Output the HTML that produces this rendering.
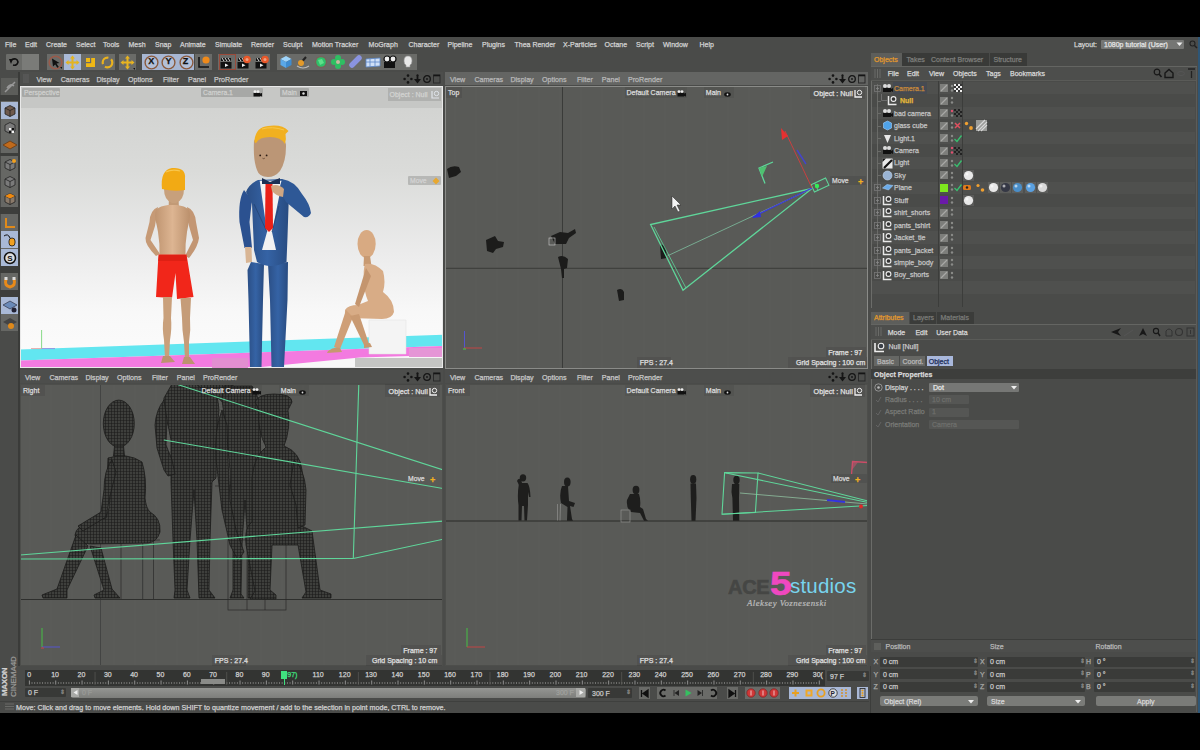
<!DOCTYPE html><html><head><meta charset="utf-8"><style>
*{margin:0;padding:0;box-sizing:border-box}
html,body{width:1200px;height:750px;overflow:hidden;background:#000}
body{position:relative;font-family:"Liberation Sans",sans-serif;color:#d8d8d8}
.a{position:absolute}
.t{position:absolute;white-space:nowrap;line-height:1;-webkit-text-stroke:0.25px currentColor}
svg{position:absolute;overflow:visible}
</style></head><body>
<div class="a" style="left:0px;top:0px;width:1200px;height:37px;background:#000;"></div>
<div class="a" style="left:0px;top:37px;width:1200px;height:676px;background:#4a4b49;"></div>
<div class="a" style="left:0px;top:713px;width:1200px;height:37px;background:#000;"></div>
<div class="t" style="left:5px;top:40.5px;font-size:7.0px;color:#d2d2d2;">File</div>
<div class="t" style="left:25px;top:40.5px;font-size:7.0px;color:#d2d2d2;">Edit</div>
<div class="t" style="left:46px;top:40.5px;font-size:7.0px;color:#d2d2d2;">Create</div>
<div class="t" style="left:76px;top:40.5px;font-size:7.0px;color:#d2d2d2;">Select</div>
<div class="t" style="left:103px;top:40.5px;font-size:7.0px;color:#d2d2d2;">Tools</div>
<div class="t" style="left:128.5px;top:40.5px;font-size:7.0px;color:#d2d2d2;">Mesh</div>
<div class="t" style="left:155px;top:40.5px;font-size:7.0px;color:#d2d2d2;">Snap</div>
<div class="t" style="left:180px;top:40.5px;font-size:7.0px;color:#d2d2d2;">Animate</div>
<div class="t" style="left:215px;top:40.5px;font-size:7.0px;color:#d2d2d2;">Simulate</div>
<div class="t" style="left:251px;top:40.5px;font-size:7.0px;color:#d2d2d2;">Render</div>
<div class="t" style="left:283px;top:40.5px;font-size:7.0px;color:#d2d2d2;">Sculpt</div>
<div class="t" style="left:312px;top:40.5px;font-size:7.0px;color:#d2d2d2;">Motion Tracker</div>
<div class="t" style="left:368.6px;top:40.5px;font-size:7.0px;color:#d2d2d2;">MoGraph</div>
<div class="t" style="left:408.5px;top:40.5px;font-size:7.0px;color:#d2d2d2;">Character</div>
<div class="t" style="left:447.5px;top:40.5px;font-size:7.0px;color:#d2d2d2;">Pipeline</div>
<div class="t" style="left:482px;top:40.5px;font-size:7.0px;color:#d2d2d2;">Plugins</div>
<div class="t" style="left:514.5px;top:40.5px;font-size:7.0px;color:#d2d2d2;">Thea Render</div>
<div class="t" style="left:563px;top:40.5px;font-size:7.0px;color:#d2d2d2;">X-Particles</div>
<div class="t" style="left:604.5px;top:40.5px;font-size:7.0px;color:#d2d2d2;">Octane</div>
<div class="t" style="left:636px;top:40.5px;font-size:7.0px;color:#d2d2d2;">Script</div>
<div class="t" style="left:663px;top:40.5px;font-size:7.0px;color:#d2d2d2;">Window</div>
<div class="t" style="left:699.5px;top:40.5px;font-size:7.0px;color:#d2d2d2;">Help</div>
<div class="a" style="left:6px;top:54px;width:33px;height:16px;background:#6b6c69;border-radius:1px"></div>
<div class="a" style="left:22px;top:54px;width:17px;height:16px;background:#7a7b78;"></div>
<svg style="left:8px;top:56px;" width="12" height="12" viewBox="0 0 12 12"><path d="M3 4 Q9 1 10 6 Q9 10 5 9" stroke="#111" stroke-width="1.6" fill="none"/><path d="M1 3 L5 3 L3 8 Z" fill="#111"/></svg>
<div class="a" style="left:47px;top:54px;width:89px;height:16px;background:#6a6b68;"></div>
<div class="a" style="left:64px;top:54px;width:17px;height:16px;background:#a9b9d6;"></div>
<svg style="left:48px;top:55px;" width="15" height="15" viewBox="0 0 15 15"><circle cx="7.5" cy="7.5" r="6.3" fill="none" stroke="#9a5a4a" stroke-width="1.6"/><path d="M4 3.5 L11.5 8 L8.5 8.6 L10.8 12 L9.3 12.8 L7.2 9.6 L5 11.6 Z" fill="#111"/><path d="M12 12 L14 14 L14 12 Z" fill="#111"/></svg>
<svg style="left:65px;top:55px;" width="15" height="15" viewBox="0 0 15 15"><path d="M7.5 2.5 L7.5 12.5 M2.5 7.5 L12.5 7.5" stroke="#e3b420" stroke-width="2"/><path d="M7.5 0.5 L10 3.5 L5 3.5 Z M7.5 14.5 L10 11.5 L5 11.5 Z M0.5 7.5 L3.5 5 L3.5 10 Z M14.5 7.5 L11.5 5 L11.5 10 Z" fill="#e3b420"/></svg>
<svg style="left:83px;top:55px;" width="15" height="15" viewBox="0 0 15 15"><rect x="3" y="3" width="9" height="9" fill="#f0b814"/><rect x="7" y="3" width="1.2" height="5" fill="#6a6b68"/><rect x="3" y="7" width="5" height="1.2" fill="#6a6b68"/></svg>
<svg style="left:100px;top:55px;" width="15" height="15" viewBox="0 0 15 15"><circle cx="7.5" cy="7.5" r="4.8" fill="none" stroke="#eab21e" stroke-width="2.2" stroke-dasharray="10 3"/></svg>
<div class="a" style="left:115px;top:54px;width:4px;height:16px;background:#4a4b49;"></div>
<div class="a" style="left:119px;top:54px;width:17px;height:16px;background:#6a6b68;"></div>
<svg style="left:120px;top:55px;" width="15" height="15" viewBox="0 0 15 15"><path d="M7.5 2.5 L7.5 12.5 M2.5 7.5 L12.5 7.5" stroke="#e8b420" stroke-width="2"/><path d="M7.5 0.5 L10 3.5 L5 3.5 Z M7.5 14.5 L10 11.5 L5 11.5 Z M0.5 7.5 L3.5 5 L3.5 10 Z M14.5 7.5 L11.5 5 L11.5 10 Z" fill="#e8b420"/><path d="M13 13 L15 15 L15 13 Z" fill="#111"/></svg>
<div class="a" style="left:142px;top:54px;width:52px;height:16px;background:#a7b6d2;"></div>
<svg style="left:144.0px;top:54.5px;" width="15" height="15" viewBox="0 0 15 15"><circle cx="7.5" cy="7.5" r="6.4" fill="#b3c0d8" stroke="#8b5a3c" stroke-width="1.4"/></svg>
<div class="t" style="left:148.2px;top:57.3px;font-size:9px;color:#111;font-weight:bold">X</div>
<svg style="left:161.3px;top:54.5px;" width="15" height="15" viewBox="0 0 15 15"><circle cx="7.5" cy="7.5" r="6.4" fill="#b3c0d8" stroke="#8b5a3c" stroke-width="1.4"/></svg>
<div class="t" style="left:165.5px;top:57.3px;font-size:9px;color:#111;font-weight:bold">Y</div>
<svg style="left:178.6px;top:54.5px;" width="15" height="15" viewBox="0 0 15 15"><circle cx="7.5" cy="7.5" r="6.4" fill="#b3c0d8" stroke="#8b5a3c" stroke-width="1.4"/></svg>
<div class="t" style="left:182.79999999999998px;top:57.3px;font-size:9px;color:#111;font-weight:bold">Z</div>
<div class="a" style="left:195px;top:54px;width:17px;height:16px;background:#6a6b68;"></div>
<svg style="left:196px;top:55px;" width="15" height="15" viewBox="0 0 15 15"><path d="M3 2 L3 12 L13 12" stroke="#111" stroke-width="1.5" fill="none"/><circle cx="10" cy="5" r="3.6" fill="#ef8a1a"/></svg>
<div class="a" style="left:218px;top:54px;width:52px;height:16px;background:#6a6b68;"></div>
<div class="a" style="left:218.5px;top:54px;width:17px;height:16px;background:none;border:1px solid #9a4a3a"></div>
<svg style="left:219.0px;top:55px;" width="15" height="15" viewBox="0 0 15 15"><rect x="2" y="3" width="10" height="3" fill="#111"/><path d="M3 3 L5 6 M6 3 L8 6 M9 3 L11 6" stroke="#ddd" stroke-width="1"/><rect x="1.5" y="7" width="11" height="6.5" fill="#111"/><path d="M6 8.5 L9.5 10.2 L6 12 Z" fill="#eee"/></svg>
<svg style="left:236.3px;top:55px;" width="15" height="15" viewBox="0 0 15 15"><rect x="2" y="3" width="10" height="3" fill="#111"/><path d="M3 3 L5 6 M6 3 L8 6 M9 3 L11 6" stroke="#ddd" stroke-width="1"/><rect x="1.5" y="7" width="11" height="6.5" fill="#111"/><path d="M6 8.5 L9.5 10.2 L6 12 Z" fill="#eee"/><circle cx="11" cy="4.5" r="3.8" fill="#e8582a"/><circle cx="11" cy="4.5" r="1.5" fill="#f0a080"/></svg>
<svg style="left:253.6px;top:55px;" width="15" height="15" viewBox="0 0 15 15"><rect x="2" y="3" width="10" height="3" fill="#111"/><path d="M3 3 L5 6 M6 3 L8 6 M9 3 L11 6" stroke="#ddd" stroke-width="1"/><rect x="1.5" y="7" width="11" height="6.5" fill="#111"/><path d="M6 8.5 L9.5 10.2 L6 12 Z" fill="#eee"/><circle cx="11" cy="4.5" r="3.8" fill="#e8582a"/><circle cx="11" cy="4.5" r="1.5" fill="#f0a080"/></svg>
<div class="a" style="left:277px;top:54px;width:140px;height:16px;background:#6a6b68;"></div>
<svg style="left:278.0px;top:54px;" width="16" height="16" viewBox="0 0 16 16"><path d="M2.5 5 L8 2 L13.5 5 L8 8 Z" fill="#9fd4fa"/><path d="M2.5 5 L8 8 L8 14 L2.5 11 Z" fill="#5aa8e8"/><path d="M13.5 5 L8 8 L8 14 L13.5 11 Z" fill="#3f8cd0"/></svg>
<svg style="left:295.4px;top:54px;" width="16" height="16" viewBox="0 0 16 16"><path d="M4 11 L11 3" stroke="#222" stroke-width="2"/><circle cx="6" cy="9" r="3" fill="#e39a2a"/><path d="M2 12 Q8 16 14 12" stroke="#bbb" stroke-width="1.2" fill="none"/></svg>
<svg style="left:312.8px;top:54px;" width="16" height="16" viewBox="0 0 16 16"><circle cx="8" cy="8" r="6" fill="#8a5a4a" opacity="0.5"/><circle cx="8" cy="8" r="4.8" fill="#2fc06a"/><path d="M5 6 L9 5 L11 9 L7 11 Z" fill="#5ee08a"/></svg>
<svg style="left:330.2px;top:54px;" width="16" height="16" viewBox="0 0 16 16"><circle cx="8" cy="4" r="3" fill="#2fbf62"/><circle cx="8" cy="12" r="3" fill="#2fbf62"/><circle cx="4" cy="8" r="3" fill="#2fbf62"/><circle cx="12" cy="8" r="3" fill="#2fbf62"/><circle cx="8" cy="8" r="2" fill="#c8b8a0"/></svg>
<svg style="left:347.6px;top:54px;" width="16" height="16" viewBox="0 0 16 16"><path d="M4 11 L11 4" stroke="#8a94e0" stroke-width="5.5" stroke-linecap="round"/></svg>
<svg style="left:365.0px;top:54px;" width="16" height="16" viewBox="0 0 16 16"><path d="M1 5 L15 4 L15 12 L1 13 Z" fill="#cfe0f7" stroke="#5b86c8" stroke-width="0.8"/><path d="M1 8 L15 8 M5 4.5 L5 12.5 M10 4.3 L10 12.3" stroke="#5b86c8" stroke-width="0.8"/></svg>
<svg style="left:382.4px;top:54px;" width="16" height="16" viewBox="0 0 16 16"><circle cx="5" cy="5" r="3" fill="#eee" stroke="#111" stroke-width="1.2"/><circle cx="11" cy="5" r="3" fill="#eee" stroke="#111" stroke-width="1.2"/><rect x="2" y="8" width="11" height="6" fill="#111"/></svg>
<svg style="left:399.79999999999995px;top:54px;" width="16" height="16" viewBox="0 0 16 16"><path d="M8 2 Q12 2 12 7 Q12 10 10 11 L10 13 L6 13 L6 11 Q4 10 4 7 Q4 2 8 2 Z" fill="#e8e8e8" stroke="#999" stroke-width="0.6"/></svg>
<div class="a" style="left:0px;top:72px;width:19px;height:594px;background:#4a4b49;"></div>
<div class="a" style="left:17.5px;top:72px;width:2.5px;height:594px;background:#3a3b39;"></div>
<div class="a" style="left:0px;top:95px;width:17.5px;height:6px;background:#3d3e3c;"></div>
<div class="a" style="left:0px;top:153px;width:17.5px;height:3px;background:#3d3e3c;"></div>
<div class="a" style="left:0px;top:207px;width:17.5px;height:7px;background:#3d3e3c;"></div>
<div class="a" style="left:0px;top:266px;width:17.5px;height:7px;background:#3d3e3c;"></div>
<div class="a" style="left:0px;top:290px;width:17.5px;height:7px;background:#3d3e3c;"></div>
<div class="a" style="left:1px;top:78px;width:16.5px;height:17px;background:#676865;"></div>
<div class="a" style="left:1px;top:101px;width:16.5px;height:52px;background:#676865;"></div>
<div class="a" style="left:1px;top:156px;width:16.5px;height:51px;background:#676865;"></div>
<div class="a" style="left:1px;top:214px;width:16.5px;height:52px;background:#676865;"></div>
<div class="a" style="left:1px;top:273px;width:16.5px;height:17px;background:#676865;"></div>
<div class="a" style="left:1px;top:297px;width:16.5px;height:34px;background:#676865;"></div>
<div class="a" style="left:1px;top:78px;width:16.5px;height:17px;background:#5c5d5a;"></div>
<svg style="left:1.5px;top:78.5px;" width="16" height="16" viewBox="0 0 16 16"><path d="M3 13 L13 3 M5 9 Q8 4 12 7" stroke="#999" stroke-width="1.5" fill="none"/></svg>
<div class="a" style="left:1px;top:102px;width:16.5px;height:17px;background:#a9b9d6;"></div>
<svg style="left:1.5px;top:102.5px;" width="16" height="16" viewBox="0 0 16 16"><path d="M3 5 L8 2.5 L13 5 L13 11 L8 13.5 L3 11 Z" fill="#6e5a4e" stroke="#222" stroke-width="0.8"/><path d="M3 5 L8 7.5 L13 5 M8 7.5 L8 13.5" stroke="#222" stroke-width="0.8" fill="none"/></svg>
<div class="a" style="left:1px;top:119px;width:16.5px;height:17px;background:#666764;"></div>
<svg style="left:1.5px;top:119.5px;" width="16" height="16" viewBox="0 0 16 16"><path d="M3 5 L8 2.5 L13 5 L13 11 L8 13.5 L3 11 Z" fill="#7a7a7a" stroke="#222" stroke-width="0.8"/><path d="M7 8 L12 8 L12 13 L7 13 Z" fill="#111"/><path d="M7 8 L9.5 8 L9.5 10.5 L7 10.5 Z M9.5 10.5 L12 10.5 L12 13 L9.5 13Z" fill="#f5f5f5"/></svg>
<div class="a" style="left:1px;top:136px;width:16.5px;height:17px;background:#666764;"></div>
<svg style="left:1.5px;top:136.5px;" width="16" height="16" viewBox="0 0 16 16"><path d="M1 8 L8 4 L15 8 L8 12 Z" fill="#c06a1c" stroke="#6b3a10" stroke-width="0.8"/></svg>
<div class="a" style="left:1px;top:156px;width:16.5px;height:17px;background:#666764;"></div>
<svg style="left:1.5px;top:156.5px;" width="16" height="16" viewBox="0 0 16 16"><path d="M3 5 L8 2.5 L13 5 L13 11 L8 13.5 L3 11 Z" fill="#7a7a7a" stroke="#222" stroke-width="0.8"/><path d="M3 5 L8 7.5 L13 5 M8 7.5 L8 13.5" stroke="#222" stroke-width="0.8" fill="none"/><circle cx="12" cy="4" r="2" fill="#f0a020"/></svg>
<div class="a" style="left:1px;top:173px;width:16.5px;height:17px;background:#666764;"></div>
<svg style="left:1.5px;top:173.5px;" width="16" height="16" viewBox="0 0 16 16"><path d="M3 5 L8 2.5 L13 5 L13 11 L8 13.5 L3 11 Z" fill="#7a7a7a" stroke="#222" stroke-width="0.8"/><path d="M3 5 L8 7.5 L13 5 M8 7.5 L8 13.5" stroke="#222" stroke-width="0.8" fill="none"/></svg>
<div class="a" style="left:1px;top:190px;width:16.5px;height:17px;background:#666764;"></div>
<svg style="left:1.5px;top:190.5px;" width="16" height="16" viewBox="0 0 16 16"><path d="M3 5 L8 2.5 L13 5 L13 11 L8 13.5 L3 11 Z" fill="#8a7a6a" stroke="#222" stroke-width="0.8"/><path d="M3 5 L8 7.5 L13 5 M8 7.5 L8 13.5" stroke="#222" stroke-width="0.8" fill="none"/><path d="M3 5 L8 2.5 L13 5 L8 7.5 Z" fill="#f08a10"/></svg>
<div class="a" style="left:1px;top:214px;width:16.5px;height:17px;background:#666764;"></div>
<svg style="left:1.5px;top:214.5px;" width="16" height="16" viewBox="0 0 16 16"><path d="M4 3 L4 12 L13 12" stroke="#e08a1a" stroke-width="2" fill="none"/></svg>
<div class="a" style="left:1px;top:231px;width:16.5px;height:17px;background:#a9b9d6;"></div>
<svg style="left:1.5px;top:231.5px;" width="16" height="16" viewBox="0 0 16 16"><path d="M2 4 Q6 1 8 6" stroke="#111" stroke-width="1" fill="none"/><rect x="7" y="6" width="6" height="8" rx="3" fill="#f0a020" stroke="#111" stroke-width="0.8"/></svg>
<div class="a" style="left:1px;top:249px;width:16.5px;height:17px;background:#a9b9d6;"></div>
<svg style="left:1.5px;top:249.5px;" width="16" height="16" viewBox="0 0 16 16"><circle cx="8" cy="8" r="5.5" fill="#ddd" stroke="#111" stroke-width="1.5"/><text x="5.2" y="11" font-size="8" font-weight="bold" fill="#111" font-family="Liberation Sans">S</text></svg>
<div class="a" style="left:1px;top:273px;width:16.5px;height:17px;background:#666764;"></div>
<svg style="left:1.5px;top:273.5px;" width="16" height="16" viewBox="0 0 16 16"><path d="M4 5 Q2 12 8 13 Q14 12 12 5" stroke="#e88a1a" stroke-width="3" fill="none"/><rect x="2.5" y="3" width="3" height="3" fill="#ddd"/><rect x="10.5" y="3" width="3" height="3" fill="#ddd"/></svg>
<div class="a" style="left:1px;top:297px;width:16.5px;height:17px;background:#a9b9d6;"></div>
<svg style="left:1.5px;top:297.5px;" width="16" height="16" viewBox="0 0 16 16"><path d="M1 7 L8 3 L15 7 L8 11 Z" fill="#6a8ab8" stroke="#223" stroke-width="0.6"/><circle cx="12" cy="12" r="2.5" fill="#223"/></svg>
<div class="a" style="left:1px;top:314px;width:16.5px;height:17px;background:#666764;"></div>
<svg style="left:1.5px;top:314.5px;" width="16" height="16" viewBox="0 0 16 16"><path d="M1 7 L8 3 L15 7 L8 11 Z" fill="#444" /><circle cx="9" cy="11" r="3" fill="#e08a1a"/></svg>
<div class="a" style="left:20px;top:72px;width:423px;height:13px;background:#4d4e4c;"></div>
<svg style="left:23px;top:74px;" width="8" height="9" viewBox="0 0 8 9"><path d="M1 0 L1 9 M3 0 L3 9 M5 0 L5 9" stroke="#666" stroke-width="0.8"/></svg>
<div class="t" style="left:36.4px;top:77.0px;font-size:7.1px;color:#c8c8c8;">View</div>
<div class="t" style="left:60.7px;top:77.0px;font-size:7.1px;color:#c8c8c8;">Cameras</div>
<div class="t" style="left:96.4px;top:77.0px;font-size:7.1px;color:#c8c8c8;">Display</div>
<div class="t" style="left:128.0px;top:77.0px;font-size:7.1px;color:#c8c8c8;">Options</div>
<div class="t" style="left:163.0px;top:77.0px;font-size:7.1px;color:#c8c8c8;">Filter</div>
<div class="t" style="left:188.0px;top:77.0px;font-size:7.1px;color:#c8c8c8;">Panel</div>
<div class="t" style="left:214.0px;top:77.0px;font-size:7.1px;color:#c8c8c8;">ProRender</div>
<svg style="left:403px;top:73.5px;" width="40" height="10" viewBox="0 0 40 10"><circle cx="5" cy="1.6" r="1.3" fill="#151515"/><circle cx="5" cy="8.4" r="1.3" fill="#151515"/><circle cx="1.6" cy="5" r="1.3" fill="#151515"/><circle cx="8.4" cy="5" r="1.3" fill="#151515"/><circle cx="14.5" cy="1.2" r="1" fill="#151515"/><path d="M14.5 1 L14.5 6" stroke="#151515" stroke-width="1.8"/><path d="M11 5 L18 5 L14.5 9.5 Z" fill="#151515"/><circle cx="24" cy="5" r="3.3" fill="none" stroke="#151515" stroke-width="1.3"/><circle cx="24" cy="5" r="0.9" fill="#151515"/><rect x="30.5" y="1" width="6.5" height="8" fill="none" stroke="#2a2a2a" stroke-width="1"/><path d="M30.5 1.5 L37 1.5" stroke="#151515" stroke-width="1.6"/></svg>
<div class="a" style="left:445px;top:72px;width:423px;height:13px;background:#646563;"></div>
<div class="t" style="left:450px;top:77.0px;font-size:7.1px;color:#b8b8b8;">View</div>
<div class="t" style="left:474.4px;top:77.0px;font-size:7.1px;color:#b8b8b8;">Cameras</div>
<div class="t" style="left:510.4px;top:77.0px;font-size:7.1px;color:#b8b8b8;">Display</div>
<div class="t" style="left:542px;top:77.0px;font-size:7.1px;color:#b8b8b8;">Options</div>
<div class="t" style="left:577px;top:77.0px;font-size:7.1px;color:#b8b8b8;">Filter</div>
<div class="t" style="left:601.8px;top:77.0px;font-size:7.1px;color:#b8b8b8;">Panel</div>
<div class="t" style="left:628px;top:77.0px;font-size:7.1px;color:#b8b8b8;">ProRender</div>
<svg style="left:828px;top:73.5px;" width="40" height="10" viewBox="0 0 40 10"><circle cx="5" cy="1.6" r="1.3" fill="#151515"/><circle cx="5" cy="8.4" r="1.3" fill="#151515"/><circle cx="1.6" cy="5" r="1.3" fill="#151515"/><circle cx="8.4" cy="5" r="1.3" fill="#151515"/><circle cx="14.5" cy="1.2" r="1" fill="#151515"/><path d="M14.5 1 L14.5 6" stroke="#151515" stroke-width="1.8"/><path d="M11 5 L18 5 L14.5 9.5 Z" fill="#151515"/><circle cx="24" cy="5" r="3.3" fill="none" stroke="#151515" stroke-width="1.3"/><circle cx="24" cy="5" r="0.9" fill="#151515"/><rect x="30.5" y="1" width="6.5" height="8" fill="none" stroke="#2a2a2a" stroke-width="1"/><path d="M30.5 1.5 L37 1.5" stroke="#151515" stroke-width="1.6"/></svg>
<div class="a" style="left:20px;top:370px;width:423px;height:13px;background:#4d4e4c;"></div>
<div class="t" style="left:25px;top:375.0px;font-size:7.1px;color:#c8c8c8;">View</div>
<div class="t" style="left:49.4px;top:375.0px;font-size:7.1px;color:#c8c8c8;">Cameras</div>
<div class="t" style="left:85.4px;top:375.0px;font-size:7.1px;color:#c8c8c8;">Display</div>
<div class="t" style="left:117px;top:375.0px;font-size:7.1px;color:#c8c8c8;">Options</div>
<div class="t" style="left:152px;top:375.0px;font-size:7.1px;color:#c8c8c8;">Filter</div>
<div class="t" style="left:176.8px;top:375.0px;font-size:7.1px;color:#c8c8c8;">Panel</div>
<div class="t" style="left:203px;top:375.0px;font-size:7.1px;color:#c8c8c8;">ProRender</div>
<svg style="left:403px;top:371.5px;" width="40" height="10" viewBox="0 0 40 10"><circle cx="5" cy="1.6" r="1.3" fill="#151515"/><circle cx="5" cy="8.4" r="1.3" fill="#151515"/><circle cx="1.6" cy="5" r="1.3" fill="#151515"/><circle cx="8.4" cy="5" r="1.3" fill="#151515"/><circle cx="14.5" cy="1.2" r="1" fill="#151515"/><path d="M14.5 1 L14.5 6" stroke="#151515" stroke-width="1.8"/><path d="M11 5 L18 5 L14.5 9.5 Z" fill="#151515"/><circle cx="24" cy="5" r="3.3" fill="none" stroke="#151515" stroke-width="1.3"/><circle cx="24" cy="5" r="0.9" fill="#151515"/><rect x="30.5" y="1" width="6.5" height="8" fill="none" stroke="#2a2a2a" stroke-width="1"/><path d="M30.5 1.5 L37 1.5" stroke="#151515" stroke-width="1.6"/></svg>
<div class="a" style="left:445px;top:370px;width:423px;height:13px;background:#4d4e4c;"></div>
<div class="t" style="left:450px;top:375.0px;font-size:7.1px;color:#c8c8c8;">View</div>
<div class="t" style="left:474.4px;top:375.0px;font-size:7.1px;color:#c8c8c8;">Cameras</div>
<div class="t" style="left:510.4px;top:375.0px;font-size:7.1px;color:#c8c8c8;">Display</div>
<div class="t" style="left:542px;top:375.0px;font-size:7.1px;color:#c8c8c8;">Options</div>
<div class="t" style="left:577px;top:375.0px;font-size:7.1px;color:#c8c8c8;">Filter</div>
<div class="t" style="left:601.8px;top:375.0px;font-size:7.1px;color:#c8c8c8;">Panel</div>
<div class="t" style="left:628px;top:375.0px;font-size:7.1px;color:#c8c8c8;">ProRender</div>
<svg style="left:828px;top:371.5px;" width="40" height="10" viewBox="0 0 40 10"><circle cx="5" cy="1.6" r="1.3" fill="#151515"/><circle cx="5" cy="8.4" r="1.3" fill="#151515"/><circle cx="1.6" cy="5" r="1.3" fill="#151515"/><circle cx="8.4" cy="5" r="1.3" fill="#151515"/><circle cx="14.5" cy="1.2" r="1" fill="#151515"/><path d="M14.5 1 L14.5 6" stroke="#151515" stroke-width="1.8"/><path d="M11 5 L18 5 L14.5 9.5 Z" fill="#151515"/><circle cx="24" cy="5" r="3.3" fill="none" stroke="#151515" stroke-width="1.3"/><circle cx="24" cy="5" r="0.9" fill="#151515"/><rect x="30.5" y="1" width="6.5" height="8" fill="none" stroke="#2a2a2a" stroke-width="1"/><path d="M30.5 1.5 L37 1.5" stroke="#151515" stroke-width="1.6"/></svg>
<svg style="left:20px;top:86px" width="423" height="282" viewBox="20 86 423 282">
    <defs>
      <linearGradient id="bgp" x1="0" y1="0" x2="0" y2="1">
        <stop offset="0" stop-color="#d0d1cf"/><stop offset="0.3" stop-color="#dadbd9"/><stop offset="0.6" stop-color="#ececec"/><stop offset="0.8" stop-color="#f8f8f8"/><stop offset="1" stop-color="#fcfcfc"/>
      </linearGradient>
      <linearGradient id="skin" x1="0" y1="0" x2="1" y2="0">
        <stop offset="0" stop-color="#bf9470"/><stop offset="0.5" stop-color="#ddb592"/><stop offset="1" stop-color="#bb906c"/>
      </linearGradient>
      <linearGradient id="suit" x1="0" y1="0" x2="1" y2="0">
        <stop offset="0" stop-color="#2b4f86"/><stop offset="0.5" stop-color="#3563a5"/><stop offset="1" stop-color="#284b80"/>
      </linearGradient>
      <clipPath id="cTL"><rect x="20" y="86" width="423" height="282"/></clipPath>
    </defs>
    <g clip-path="url(#cTL)">
    <rect x="20" y="86" width="423" height="282" fill="url(#bgp)"/>
    <rect x="20" y="86" width="423" height="22" fill="#c6c7c5"/>
    <!-- floor -->
    <path d="M20 349.5 L443 334.8 L443 346 L20 360.5 Z" fill="#62e6f0"/>
    <path d="M20 360.5 L443 346 L443 369 L20 369 Z" fill="#f37ae0"/>
    <path d="M240 369 L360 357.5 L443 355 L443 369 Z" fill="#f7f7f7"/>
    <!-- white box (seat) -->
    <path d="M369 320 L406 320 L406 354 L369 354 Z" fill="#f4f4f4" stroke="#e2e2e2" stroke-width="0.5"/>
    <!-- mannequin -->
    <g fill="#d8ac86">
      <ellipse cx="366.6" cy="244" rx="9.1" ry="14" fill="#d8aa82"/>
      <path d="M364 256 L370 256 L371.5 266 L363.5 266 Z" fill="#c89a72"/>
      <path d="M365 264 Q374 262 383 271 Q386 282 383 292 Q394 300 394 312 Q392 319 382 319 L350 318 Q344 316 345 310 Q348 305 358 305 L368 301 Q364 292 364 280 Q363 270 365 264 Z"/>
      <path d="M346 310 L334 347 L340 349 L353 317 Z" fill="#cf9f77"/>
      <path d="M350 316 L364 345 L369 344 L359 314 Z" fill="#c99a72"/>
      <path d="M366 268 L355 304 L359 307 L371 276 Z" fill="#c4956e"/>
      <path d="M328 351 Q334 346 340 348 L342 352 L327 353 Z" fill="#c69870"/>
      <path d="M364 344 L370 343 L372 347 L364 348 Z" fill="#c69870"/>
    </g>
    <!-- boy -->
    <g>
      <path d="M169 199 L178.5 199 L179 208 L168.5 208 Z" fill="#c29a76"/>
      <path d="M164 189 L184 189 Q184 200 176 203 L172 203 Q164 200 164 189 Z" fill="#c7a07c"/>
      <path d="M162 189 Q160 170 172 168 Q186 167 185 178 L185 190 Q174 192 162 189 Z" fill="#f2aa14"/>
      <path d="M166 172 Q172 169 180 171" stroke="#f8c850" stroke-width="1.2" fill="none"/>
      <!-- arms -->
      <path d="M158 207 Q150 210 149.5 222 L145.5 238 Q145 245 156 256 L160 254 L150.5 240 L155 226 Z" fill="#c69a76"/>
      <path d="M187 207 Q195 210 196 222 L199 238 Q198 247 189 258 L185 256 L193 240 L189 226 Z" fill="#c39673"/>
      <!-- torso -->
      <path d="M168 205 Q160 206 157 209 Q154 212 155.5 220 Q157 226 158 232 Q160 244 159.5 256 L185.5 256 Q185 244 187 232 Q188 226 189.5 220 Q191 212 188 209 Q185 206 177 205 Z" fill="url(#skin)"/>
      <!-- shorts -->
      <path d="M158.5 254.5 L186.5 254.5 L193.5 297 L177 299 L175.5 273 L172 298 L156 297 Z" fill="#f1261a"/>
      <path d="M159 255 L186 255 L187 261 L158 261 Z" fill="#d71e12" opacity="0.7"/>
      <!-- legs -->
      <path d="M163 297 L172 297 L171 318 Q172 328 170 340 L169 358 L165 358 L164 340 Q162 328 163.5 318 Z" fill="#c9a07b"/>
      <path d="M180.5 298 L191 298 L190 318 Q191 330 189 342 L189 359 L185 359 L184 342 Q182 330 182 318 Z" fill="#c59c78"/>
      <path d="M163 356 L170 356 L175 362 L161 363 Z" fill="#bd9270"/>
      <path d="M184 357 L190 357 L195 364 L182 364 Z" fill="#bd9270"/>
    </g>
    <!-- man -->
    <g>
      <!-- legs -->
      <path d="M251 262 L264 264 L263 300 L261.5 367 L250 367 L248.5 300 L247.5 270 Z" fill="url(#suit)"/>
      <path d="M268 264 L288 262 L287.5 300 L284 367 L271.5 367 L270 300 Z" fill="url(#suit)"/>
      <!-- left arm -->
      <path d="M244 190 Q238 200 239.5 222 L244.5 248 L252 248 L249.5 222 L252 200 Z" fill="#2b5190"/>
      <path d="M245 247 L251.5 247 L252 262 L246 263 Z" fill="#d8b594"/>
      <!-- torso -->
      <path d="M258 180 Q249 184 246 192 L252 204 L254 250 L257 262 Q270 270 286.5 262 L287.5 237 L289 192 L282 179 Z" fill="url(#suit)"/>
      <path d="M259.7 180.7 L282.3 180.7 L272 232 L276 250 L262 250 L267 232 Z" fill="#f2f2f2"/>
      <path d="M254 204 L267 232" stroke="#22406e" stroke-width="0.7" fill="none"/>
      <path d="M279 206 L272 232" stroke="#22406e" stroke-width="0.7" fill="none"/>
      <path d="M265.5 184 L272.5 184 L273 228 L269 232 L265 228 Z" fill="#ea2118"/>
      <path d="M262 178 L270 182 L280 178 L280 184 L270 184 L262 184 Z" fill="#1d3155"/>
      <!-- raised right arm -->
      <path d="M282 179 Q295 181 302 194 Q310 204 311 213 Q309 218 304 217 L286 202 L279 190 Z" fill="#2e5896"/>
      <path d="M271 186 Q278 183 284 189 L283 197 Q276 196 272 191 Z" fill="#cfa682"/>
      <!-- head -->
      <path d="M254 141 Q256 136 270 136 Q286 136 286 146 Q286 162 280 171 Q275 177 268 177 Q259 177 257 170 Q253 160 254 141 Z" fill="#bb9676"/>
      <path d="M254.5 140 Q256 127 268 126 Q282 124 288.5 131 L285.5 134 Q286.5 139 285 144 Q281 137 270 137 Q259 137 256 143 Q254 143 254.5 140 Z" fill="#f1b020"/><path d="M262 129 Q272 126 284 130" stroke="#f7c84a" stroke-width="1" fill="none"/>
      <circle cx="260.2" cy="155.4" r="0.9" fill="#2a1a12"/><circle cx="266.6" cy="155.4" r="0.9" fill="#2a1a12"/>
      <path d="M262.5 158.2 Q263.6 159.2 264.8 158.2" stroke="#3a2518" stroke-width="0.6" fill="none"/>
    </g>
    <!-- axis -->
    <path d="M41.6 348.6 L41.6 330" stroke="#7cd67c" stroke-width="0.9"/>
    <path d="M41.6 348.6 L55 348.6" stroke="#8b8be0" stroke-width="0.9"/>
    <path d="M31 348.6 L41.6 348.6" stroke="#e08888" stroke-width="0.7"/>
    </g>
    <rect x="20.5" y="86.5" width="422" height="281" fill="none" stroke="#e9e9e9" stroke-width="1"/>
    </svg>
<div class="a" style="left:22px;top:88px;width:38px;height:9px;background:#a7a8a6;border-radius:1px"></div>
<div class="t" style="left:24px;top:89.6px;font-size:6.8px;color:#cfd0ce;">Perspective</div>
<div class="a" style="left:201px;top:88px;width:62px;height:9px;background:#a7a8a6;border-radius:1px"></div>
<div class="t" style="left:203px;top:89.6px;font-size:6.8px;color:#cfd0ce;">Camera.1</div>
<svg style="left:252.5px;top:90px" width="9" height="7" viewBox="0 0 9 7"><circle cx="2" cy="1.6" r="1.4" fill="#eee"/><circle cx="5" cy="1.6" r="1.4" fill="#eee"/><rect x="0.5" y="3" width="6.5" height="3.5" fill="#111"/><path d="M7 3.5 L9 3 L9 6.5 L7 6 Z" fill="#111"/></svg>
<div class="a" style="left:280px;top:88px;width:29px;height:9px;background:#a7a8a6;border-radius:1px"></div>
<div class="t" style="left:282px;top:89.6px;font-size:6.8px;color:#cfd0ce;">Main</div>
<svg style="left:300px;top:91px" width="7" height="5" viewBox="0 0 7 5"><rect x="0" y="0" width="7" height="5" fill="#111"/><circle cx="3.5" cy="2.5" r="1.2" fill="#ddd"/></svg>
<div class="a" style="left:388px;top:88px;width:53px;height:13px;background:#b0b1af;"></div>
<div class="t" style="left:389.5px;top:91.3px;font-size:7.0px;color:#d3d4d2;">Object : Null</div>
<svg style="left:431px;top:90px" width="9" height="9" viewBox="0 0 9 9"><path d="M1 1 L1 8 L8 8" stroke="#dfe4ea" stroke-width="1.2" fill="none"/><circle cx="5.5" cy="3.5" r="2.2" fill="none" stroke="#dfe4ea" stroke-width="1"/></svg>
<div class="a" style="left:355px;top:357.5px;width:87px;height:9.5px;background:#c4c5c3;"></div>
<div class="a" style="left:409px;top:347.5px;width:33px;height:9px;background:#e596d6;"></div>
<div class="a" style="left:212px;top:358px;width:36px;height:9.5px;background:#e28ed0;"></div>
<div class="a" style="left:408px;top:176px;width:33px;height:9px;background:#b7b8b6;border-radius:1px"></div>
<div class="t" style="left:410px;top:177.6px;font-size:6.8px;color:#d3d3d3;">Move</div>
<svg style="left:431.5px;top:177px" width="8" height="8" viewBox="0 0 8 8"><path d="M4 0.5 L7.5 4 L4 7.5 L0.5 4 Z" fill="#e8a830"/></svg>
<svg style="left:445px;top:86px" width="423" height="283" viewBox="445 86 423 283">
    <defs><clipPath id="cTR"><rect x="445" y="86" width="423" height="283"/></clipPath></defs>
    <g clip-path="url(#cTR)">
    <rect x="445" y="86" width="423" height="283" fill="#595a57"/>
    <path d="M455 86 L455 369" stroke="#5f605d" stroke-width="0.6"/><path d="M476 86 L476 369" stroke="#5f605d" stroke-width="0.6"/><path d="M497 86 L497 369" stroke="#5f605d" stroke-width="0.6"/><path d="M518 86 L518 369" stroke="#5f605d" stroke-width="0.6"/><path d="M539 86 L539 369" stroke="#5f605d" stroke-width="0.6"/><path d="M560 86 L560 369" stroke="#5f605d" stroke-width="0.6"/><path d="M581 86 L581 369" stroke="#5f605d" stroke-width="0.6"/><path d="M602 86 L602 369" stroke="#5f605d" stroke-width="0.6"/><path d="M623 86 L623 369" stroke="#5f605d" stroke-width="0.6"/><path d="M644 86 L644 369" stroke="#5f605d" stroke-width="0.6"/><path d="M665 86 L665 369" stroke="#5f605d" stroke-width="0.6"/><path d="M686 86 L686 369" stroke="#5f605d" stroke-width="0.6"/><path d="M707 86 L707 369" stroke="#5f605d" stroke-width="0.6"/><path d="M728 86 L728 369" stroke="#5f605d" stroke-width="0.6"/><path d="M749 86 L749 369" stroke="#5f605d" stroke-width="0.6"/><path d="M770 86 L770 369" stroke="#5f605d" stroke-width="0.6"/><path d="M791 86 L791 369" stroke="#5f605d" stroke-width="0.6"/><path d="M812 86 L812 369" stroke="#5f605d" stroke-width="0.6"/><path d="M833 86 L833 369" stroke="#5f605d" stroke-width="0.6"/><path d="M854 86 L854 369" stroke="#5f605d" stroke-width="0.6"/>
    <path d="M562.5 86 L562.5 369" stroke="#3a3b39" stroke-width="1"/>
    <path d="M445 268.3 L868 268.3" stroke="#3a3b39" stroke-width="1"/>
    <!-- silhouettes -->
    <g fill="#1c1c1b">
      <path d="M447 169 Q452 165 459 167 L461 172 L456 176 L449 178 Z"/>
      <path d="M486 240 L495 236 L498 241 L504 242 L503 247 L496 249 L493 253 L487 251 Z"/>
      <path d="M551 236 L560 232 L568 233 L575 229 L576 233 L569 238 L566 244 L555 244 Z"/>
      <rect x="549" y="238" width="6" height="7" fill="none" stroke="#ccc" stroke-width="0.6"/>
      <path d="M558 257 Q563 254 568 259 L567 268 L564 269 L564 278 L562 278 L561 269 Z"/>
      <path d="M617 290 Q622 287 624 292 L624 300 L619 301 Z"/>
      <path d="M660 245 Q664 244 666 250 L667 258 L661 259 Z"/>
    </g>
    <!-- frustum -->
    <g stroke="#5fd69a" fill="none">
      <path d="M812 188.5 L650.6 224.5 L683 290.3 Z" stroke-width="1.3"/>
      <path d="M654 227 L686 288" stroke-width="0.8"/>
      <path d="M812 188.5 L668 255.6" stroke-width="0.8" stroke="#7fbf9f"/>
      <g transform="rotate(-25 820 185)"><rect x="812" y="181" width="16" height="8" stroke-width="1"/><path d="M816 181 L816 189" stroke-width="0.8"/></g>
      <path d="M773 162 L759 168 L765 183.5" stroke-width="1.3"/><path d="M759 168 L767 166 L762 177 Z" fill="#4fc070" stroke="none"/>
    </g>
    <path d="M812 188 L753 217" stroke="#3b3bd8" stroke-width="1.3"/>
    <path d="M752 218 L760 211 L761 217 Z" fill="#3030e0"/>
    <path d="M812 188 L785 131" stroke="#c84040" stroke-width="1"/>
    <path d="M781 128 L788 136 L782 140 Z" fill="#e83030"/>
    <path d="M797 150 L806 164" stroke="#4444cc" stroke-width="1.4"/>
    <circle cx="817" cy="186" r="2.2" fill="#33ee55"/>
    <!-- cursor -->
    <path d="M672 196 L672 209 L675 206 L678 212 L680 211 L677 205 L681 205 Z" fill="#f4f4f4" stroke="#222" stroke-width="0.5"/>
    <!-- axis -->
    <path d="M464.5 348 L464.5 331" stroke="#5555dd" stroke-width="0.9"/>
    <path d="M464 348 L482 348" stroke="#cc4444" stroke-width="0.9"/>
    <path d="M463 349 L466 349" stroke="#44cc44" stroke-width="1"/>
    </g>
    <rect x="445.5" y="86.5" width="422" height="282" fill="none" stroke="#8a8b88" stroke-width="1"/>
    </svg>
<div class="a" style="left:446px;top:87px;width:16px;height:11px;background:rgba(0,0,0,0.08);"></div>
<div class="t" style="left:448px;top:89.2px;font-size:7.0px;color:#dcdcdc;">Top</div>
<div class="a" style="left:625px;top:87px;width:62px;height:11px;background:rgba(0,0,0,0.06);"></div>
<div class="t" style="left:626.5px;top:89.2px;font-size:7.0px;color:#dcdcdc;">Default Camera</div>
<svg style="left:676.5px;top:89.5px" width="9" height="7" viewBox="0 0 9 7"><circle cx="2" cy="1.6" r="1.4" fill="#eee"/><circle cx="5" cy="1.6" r="1.4" fill="#eee"/><rect x="0.5" y="3" width="6.5" height="3.5" fill="#111"/><path d="M7 3.5 L9 3 L9 6.5 L7 6 Z" fill="#111"/></svg>
<div class="a" style="left:704px;top:87px;width:30px;height:11px;background:rgba(0,0,0,0.06);"></div>
<div class="t" style="left:705.8px;top:89.2px;font-size:7.0px;color:#dcdcdc;">Main</div>
<svg style="left:723.5px;top:91.5px" width="7" height="5" viewBox="0 0 7 5"><ellipse cx="3.5" cy="2.5" rx="3.3" ry="2.2" fill="#111"/><circle cx="3.5" cy="2.5" r="0.9" fill="#ddd"/></svg>
<div class="a" style="left:810px;top:86px;width:55px;height:13px;background:rgba(0,0,0,0.08);"></div>
<div class="t" style="left:813.6px;top:89.60000000000001px;font-size:7.2px;color:#e0e0e0;">Object : Null</div>
<svg style="left:854px;top:88.5px" width="9" height="9" viewBox="0 0 9 9"><path d="M1 1 L1 8 L8 8" stroke="#f0f0f0" stroke-width="1.3" fill="none"/><circle cx="5.5" cy="3.5" r="2.2" fill="none" stroke="#f0f0f0" stroke-width="1"/></svg>
<div class="a" style="left:826px;top:347px;width:40px;height:10px;background:rgba(0,0,0,0.08);"></div>
<div class="t" style="left:828.3px;top:348.6px;font-size:7.0px;color:#e0e0e0;">Frame : 97</div>
<div class="a" style="left:787.5px;top:357px;width:79.5px;height:11px;background:rgba(0,0,0,0.08);"></div>
<div class="t" style="left:796px;top:359.3px;font-size:7.0px;color:#e0e0e0;">Grid Spacing : 100 cm</div>
<div class="a" style="left:637px;top:357px;width:34px;height:11px;background:rgba(0,0,0,0.08);"></div>
<div class="t" style="left:639.8px;top:359.3px;font-size:7.0px;color:#e0e0e0;">FPS : 27.4</div>
<div class="a" style="left:830px;top:176px;width:36px;height:9px;background:#515250;border-radius:1px"></div>
<div class="t" style="left:832px;top:177.6px;font-size:6.8px;color:#d8d8d8;">Move</div>
<div class="t" style="left:858px;top:177.5px;font-size:9px;color:#f0b020;font-weight:bold">+</div>
<svg style="left:20px;top:384px" width="423" height="282" viewBox="20 384 423 282">
    <defs><clipPath id="cBL"><rect x="20" y="384" width="423" height="282"/></clipPath><pattern id="mesh" width="3" height="3" patternUnits="userSpaceOnUse">
      <rect width="3" height="3" fill="#3e3f3c"/><path d="M0 0 L3 0 M0 0 L0 3" stroke="#191918" stroke-width="1.15"/></pattern></defs>
    <g clip-path="url(#cBL)">
    <rect x="20" y="384" width="423" height="282" fill="#595a57"/>
    <path d="M30 384 L30 666" stroke="#5f605d" stroke-width="0.6"/><path d="M51 384 L51 666" stroke="#5f605d" stroke-width="0.6"/><path d="M72 384 L72 666" stroke="#5f605d" stroke-width="0.6"/><path d="M93 384 L93 666" stroke="#5f605d" stroke-width="0.6"/><path d="M114 384 L114 666" stroke="#5f605d" stroke-width="0.6"/><path d="M135 384 L135 666" stroke="#5f605d" stroke-width="0.6"/><path d="M156 384 L156 666" stroke="#5f605d" stroke-width="0.6"/><path d="M177 384 L177 666" stroke="#5f605d" stroke-width="0.6"/><path d="M198 384 L198 666" stroke="#5f605d" stroke-width="0.6"/><path d="M219 384 L219 666" stroke="#5f605d" stroke-width="0.6"/><path d="M240 384 L240 666" stroke="#5f605d" stroke-width="0.6"/><path d="M261 384 L261 666" stroke="#5f605d" stroke-width="0.6"/><path d="M282 384 L282 666" stroke="#5f605d" stroke-width="0.6"/><path d="M303 384 L303 666" stroke="#5f605d" stroke-width="0.6"/><path d="M324 384 L324 666" stroke="#5f605d" stroke-width="0.6"/><path d="M345 384 L345 666" stroke="#5f605d" stroke-width="0.6"/><path d="M366 384 L366 666" stroke="#5f605d" stroke-width="0.6"/><path d="M387 384 L387 666" stroke="#5f605d" stroke-width="0.6"/><path d="M408 384 L408 666" stroke="#5f605d" stroke-width="0.6"/><path d="M429 384 L429 666" stroke="#5f605d" stroke-width="0.6"/>
    <path d="M100.5 384 L100.5 666" stroke="#3e3f3d" stroke-width="0.8"/>
    <path d="M20 599.5 L443 599.5" stroke="#2e2f2d" stroke-width="1"/>
    <!-- boxes -->
    <g stroke="#2a2a29" stroke-width="0.7" fill="none">
      <path d="M121 542 L121 599 M142.7 542 L142.7 599 M153.5 540 L153.5 599 M100 542 L160 540"/>
      <rect x="228" y="540" width="58" height="70"/>
      <path d="M247 540 L247 610 M265 540 L265 610"/>
      <path d="M215 486 L240 486 L240 560"/>
    </g>
    <g fill="url(#mesh)" stroke="#1c1c1b" stroke-width="0.8">
      <!-- seated mannequin -->
      <ellipse cx="118.8" cy="423.6" rx="15.5" ry="23.5"/>
      <path d="M114.5 446 L123.5 446 L124.5 456 L113.5 456 Z"/>
      <path d="M108 458 Q127 452 142 462 Q147 478 145 498 Q146 508 150 512 Q161 518 160 532 Q157 542 148 543 L92 544 Q76 544 75 535 Q76 526 90 522 L106 518 Q110 508 110 498 Q106 478 108 458 Z"/>
      <path d="M76 535 L57 589 L42 595 L43 598 L67 598 L67 590 L88 546 Z"/>
      <path d="M90 546 L104 590 L94 595 L95 598 L120 598 L112 589 L101 548 Z"/>
      <path d="M112 460 Q104 470 104 490 L101 512 L78 526 L83 531 L106 517 L110 496 L116 472 Z"/>
      <!-- standing boy back -->
      <path d="M172 384 L212 384 Q218 395 219 410 L217 430 L216 478 L212 482 L210 540 L209 590 L215 598 L199 598 L197 540 L194 490 L190 540 L187 590 L190 598 L174 598 L175 590 L173 540 L171 482 L171 440 L168 425 Q162 410 164 398 Z"/>
      <path d="M164 400 Q156 410 155 425 L157 448 L164 470 L168 476 L175 474 L172 460 L166 445 L167 420 Z"/>
      <!-- raised arm of next figure -->
      <path d="M196 384 L232 384 Q241 396 240 412 L236 428 L228 428 L229 410 Q222 398 206 392 Z"/>
      <!-- standing man front -->
      <path d="M224 386 L252 386 Q260 398 260 412 L261 470 L259 496 L259 540 L258 594 L262 598 L248 598 L248 545 L245 500 L242 545 L241 594 L244 598 L230 598 L233 590 L233 540 L231 500 L230 470 L226 430 L222 400 Z"/>
      <path d="M222 410 Q214 430 216 460 L222 510 L230 545 L238 560 L244 552 L236 530 L230 500 L228 460 L227 425 Z"/>
      <!-- seated figure with hat -->
      <path d="M255 402 Q258 394 274 394 Q292 394 292 402 L288 410 Q291 428 284 446 Q300 452 302 470 L303 500 Q302 515 300 525 L312 531 L320 590 L331 594 L331 598 L302 598 L306 592 L298 545 L272 545 L270 590 L276 595 L276 599 L250 599 L255 591 L246 545 Q244 527 252 522 L252 478 Q254 456 266 447 Q257 430 259 410 Z"/>
      <path d="M294 460 Q304 468 306 490 L305 525 L298 528 L296 505 L290 485 Z"/>
    </g>
    <!-- green camera lines -->
    <g stroke="#5fd69a" stroke-width="1.1" fill="none">
      <path d="M176 384 L445 470.5"/>
      <path d="M164 440 L445 488.9"/>
      <path d="M20 555 L445 521"/>
      <path d="M20 559 L353.3 558.5"/>
      <path d="M358.8 384 L353.3 558.5"/>
      <path d="M353.3 558.5 L445 538.8"/>
    </g>
    <path d="M42 647 L42 628" stroke="#44cc44" stroke-width="0.9"/>
    <path d="M42 647 L60 647" stroke="#5555dd" stroke-width="0.9"/>
    <path d="M41 648 L44 648" stroke="#cc4444" stroke-width="1"/>
    </g>
    <rect x="20.5" y="384.5" width="422" height="281" fill="none" stroke="#4d4e4b" stroke-width="1"/>
    </svg>
<div class="a" style="left:21px;top:385px;width:24px;height:11px;background:rgba(0,0,0,0.08);"></div>
<div class="t" style="left:23px;top:387.2px;font-size:7.0px;color:#dcdcdc;">Right</div>
<div class="a" style="left:200px;top:385px;width:62px;height:11px;background:rgba(0,0,0,0.06);"></div>
<div class="t" style="left:201.5px;top:387.2px;font-size:7.0px;color:#dcdcdc;">Default Camera</div>
<svg style="left:251.5px;top:387.5px" width="9" height="7" viewBox="0 0 9 7"><circle cx="2" cy="1.6" r="1.4" fill="#eee"/><circle cx="5" cy="1.6" r="1.4" fill="#eee"/><rect x="0.5" y="3" width="6.5" height="3.5" fill="#111"/><path d="M7 3.5 L9 3 L9 6.5 L7 6 Z" fill="#111"/></svg>
<div class="a" style="left:279px;top:385px;width:30px;height:11px;background:rgba(0,0,0,0.06);"></div>
<div class="t" style="left:280.8px;top:387.2px;font-size:7.0px;color:#dcdcdc;">Main</div>
<svg style="left:298.5px;top:389.5px" width="7" height="5" viewBox="0 0 7 5"><ellipse cx="3.5" cy="2.5" rx="3.3" ry="2.2" fill="#111"/><circle cx="3.5" cy="2.5" r="0.9" fill="#ddd"/></svg>
<div class="a" style="left:385px;top:384px;width:55px;height:13px;background:rgba(0,0,0,0.08);"></div>
<div class="t" style="left:388.6px;top:387.59999999999997px;font-size:7.2px;color:#e0e0e0;">Object : Null</div>
<svg style="left:429px;top:386.5px" width="9" height="9" viewBox="0 0 9 9"><path d="M1 1 L1 8 L8 8" stroke="#f0f0f0" stroke-width="1.3" fill="none"/><circle cx="5.5" cy="3.5" r="2.2" fill="none" stroke="#f0f0f0" stroke-width="1"/></svg>
<div class="a" style="left:401px;top:645px;width:40px;height:10px;background:rgba(0,0,0,0.08);"></div>
<div class="t" style="left:403.3px;top:646.6px;font-size:7.0px;color:#e0e0e0;">Frame : 97</div>
<div class="a" style="left:366.0px;top:655px;width:76.0px;height:11px;background:rgba(0,0,0,0.08);"></div>
<div class="t" style="left:372px;top:657.3px;font-size:7.0px;color:#e0e0e0;">Grid Spacing : 10 cm</div>
<div class="a" style="left:212px;top:655px;width:34px;height:11px;background:rgba(0,0,0,0.08);"></div>
<div class="t" style="left:214.8px;top:657.3px;font-size:7.0px;color:#e0e0e0;">FPS : 27.4</div>
<div class="t" style="left:408px;top:475.6px;font-size:6.8px;color:#d8d8d8;">Move</div>
<div class="t" style="left:430px;top:475.5px;font-size:9px;color:#f0b020;font-weight:bold">+</div>
<svg style="left:445px;top:384px" width="423" height="282" viewBox="445 384 423 282">
    <defs><clipPath id="cBR"><rect x="445" y="384" width="423" height="282"/></clipPath></defs>
    <g clip-path="url(#cBR)">
    <rect x="445" y="384" width="423" height="282" fill="#595a57"/>
    <path d="M455 384 L455 666" stroke="#5f605d" stroke-width="0.6"/><path d="M476 384 L476 666" stroke="#5f605d" stroke-width="0.6"/><path d="M497 384 L497 666" stroke="#5f605d" stroke-width="0.6"/><path d="M518 384 L518 666" stroke="#5f605d" stroke-width="0.6"/><path d="M539 384 L539 666" stroke="#5f605d" stroke-width="0.6"/><path d="M560 384 L560 666" stroke="#5f605d" stroke-width="0.6"/><path d="M581 384 L581 666" stroke="#5f605d" stroke-width="0.6"/><path d="M602 384 L602 666" stroke="#5f605d" stroke-width="0.6"/><path d="M623 384 L623 666" stroke="#5f605d" stroke-width="0.6"/><path d="M644 384 L644 666" stroke="#5f605d" stroke-width="0.6"/><path d="M665 384 L665 666" stroke="#5f605d" stroke-width="0.6"/><path d="M686 384 L686 666" stroke="#5f605d" stroke-width="0.6"/><path d="M707 384 L707 666" stroke="#5f605d" stroke-width="0.6"/><path d="M728 384 L728 666" stroke="#5f605d" stroke-width="0.6"/><path d="M749 384 L749 666" stroke="#5f605d" stroke-width="0.6"/><path d="M770 384 L770 666" stroke="#5f605d" stroke-width="0.6"/><path d="M791 384 L791 666" stroke="#5f605d" stroke-width="0.6"/><path d="M812 384 L812 666" stroke="#5f605d" stroke-width="0.6"/><path d="M833 384 L833 666" stroke="#5f605d" stroke-width="0.6"/><path d="M854 384 L854 666" stroke="#5f605d" stroke-width="0.6"/>
    <path d="M445 521 L868 521" stroke="#2a2b29" stroke-width="1"/>
    <g fill="#1e1e1d">
      <!-- fig1 hand on head -->
      <ellipse cx="523" cy="477.8" rx="3.2" ry="3.6"/>
      <path d="M517 481 Q518 478 521 479 L522 483 L519.5 486 Z"/>
      <path d="M519 483 L527.5 483 Q530 486 530.5 497 L529 497 L528 492 L528 505 L527 520.5 L524.5 520.5 L524 506 L522 506 L521.5 520.5 L518.5 520.5 L518.5 505 Q517 495 519 483 Z"/>
      <!-- fig2 seated on stool -->
      <ellipse cx="567.3" cy="482" rx="3.3" ry="4.6"/>
      <path d="M562 486 L568 486 L569 501 L575 503 L573.5 507 L570 506 L572 519 L573 520.8 L567 520.8 L567.5 507 L561 503 Q559 493 562 486 Z"/>
      <!-- fig3 seated on box -->
      <ellipse cx="636" cy="490" rx="3.4" ry="4.2"/>
      <path d="M630 494 L639 494 Q641 500 640 507 L643 509 L646 519 L648 520.8 L644 520.8 L640 513 L631 512 Q626 508 627 500 Z"/>
      <!-- fig4 -->
      <ellipse cx="693.2" cy="479.5" rx="3.1" ry="4.4"/>
      <path d="M690.5 483.5 L696 483.5 L696.5 498 L695.5 520.7 L691.5 520.7 L690.8 498 Z"/>
      <!-- fig5 -->
      <ellipse cx="736.5" cy="480" rx="3.2" ry="4.2"/>
      <path d="M732 484 L739.3 484 L739 498 L739.3 520.7 L733 520.7 L732.4 498 L731.5 492 Z"/>
    </g>
    <rect x="621" y="510" width="9" height="12" fill="none" stroke="#9a9b98" stroke-width="0.6"/>
    <path d="M557.5 504 L557.5 520.5 M560.5 504 L560 520.5" stroke="#9a9b98" stroke-width="0.6"/>
    <g stroke="#5fd69a" stroke-width="1.1" fill="none">
      <path d="M724.6 472.6 L758 473 L755.4 512.4 L722 514.2 Z"/>
      <path d="M758 473 L868 501 M726 473 L868 502.5 M722 514.2 L868 505.5"/>
      <path d="M740 493 L868 504" stroke="#8fc0a0" stroke-width="0.8"/>
    </g>
    <path d="M827 500 L845 502" stroke="#3333e0" stroke-width="2"/>
    <circle cx="861" cy="506.4" r="2" fill="#e02828"/>
    <path d="M851.5 475 L852.5 461.5 L868 462.5" stroke="#e04a6a" stroke-width="1.3" fill="none" opacity="0.85"/><path d="M852.5 462 L858 462.3 L852 470 Z" fill="#d85070" opacity="0.5"/>
    <path d="M467 647 L467 628" stroke="#44cc44" stroke-width="0.9"/>
    <path d="M467 647 L485 647" stroke="#cc4444" stroke-width="0.9"/>
    </g>
    <rect x="445.5" y="384.5" width="422" height="281" fill="none" stroke="#4d4e4b" stroke-width="1"/>
    </svg>
<div class="a" style="left:446px;top:385px;width:24px;height:11px;background:rgba(0,0,0,0.08);"></div>
<div class="t" style="left:448px;top:387.2px;font-size:7.0px;color:#dcdcdc;">Front</div>
<div class="a" style="left:625px;top:385px;width:62px;height:11px;background:rgba(0,0,0,0.06);"></div>
<div class="t" style="left:626.5px;top:387.2px;font-size:7.0px;color:#dcdcdc;">Default Camera</div>
<svg style="left:676.5px;top:387.5px" width="9" height="7" viewBox="0 0 9 7"><circle cx="2" cy="1.6" r="1.4" fill="#eee"/><circle cx="5" cy="1.6" r="1.4" fill="#eee"/><rect x="0.5" y="3" width="6.5" height="3.5" fill="#111"/><path d="M7 3.5 L9 3 L9 6.5 L7 6 Z" fill="#111"/></svg>
<div class="a" style="left:704px;top:385px;width:30px;height:11px;background:rgba(0,0,0,0.06);"></div>
<div class="t" style="left:705.8px;top:387.2px;font-size:7.0px;color:#dcdcdc;">Main</div>
<svg style="left:723.5px;top:389.5px" width="7" height="5" viewBox="0 0 7 5"><ellipse cx="3.5" cy="2.5" rx="3.3" ry="2.2" fill="#111"/><circle cx="3.5" cy="2.5" r="0.9" fill="#ddd"/></svg>
<div class="a" style="left:810px;top:384px;width:55px;height:13px;background:rgba(0,0,0,0.08);"></div>
<div class="t" style="left:813.6px;top:387.59999999999997px;font-size:7.2px;color:#e0e0e0;">Object : Null</div>
<svg style="left:854px;top:386.5px" width="9" height="9" viewBox="0 0 9 9"><path d="M1 1 L1 8 L8 8" stroke="#f0f0f0" stroke-width="1.3" fill="none"/><circle cx="5.5" cy="3.5" r="2.2" fill="none" stroke="#f0f0f0" stroke-width="1"/></svg>
<div class="a" style="left:826px;top:645px;width:40px;height:10px;background:rgba(0,0,0,0.08);"></div>
<div class="t" style="left:828.3px;top:646.6px;font-size:7.0px;color:#e0e0e0;">Frame : 97</div>
<div class="a" style="left:787.5px;top:655px;width:79.5px;height:11px;background:rgba(0,0,0,0.08);"></div>
<div class="t" style="left:796px;top:657.3px;font-size:7.0px;color:#e0e0e0;">Grid Spacing : 100 cm</div>
<div class="a" style="left:637px;top:655px;width:34px;height:11px;background:rgba(0,0,0,0.08);"></div>
<div class="t" style="left:639.8px;top:657.3px;font-size:7.0px;color:#e0e0e0;">FPS : 27.4</div>
<div class="a" style="left:831px;top:474px;width:36px;height:9px;background:#515250;border-radius:1px"></div>
<div class="t" style="left:833px;top:475.6px;font-size:6.8px;color:#d8d8d8;">Move</div>
<div class="t" style="left:855px;top:475.5px;font-size:9px;color:#f0b020;font-weight:bold">+</div>
<div class="t" style="left:728px;top:577px;font-size:20px;color:#454644;font-weight:bold;letter-spacing:-0.3px;-webkit-text-stroke:0.6px #454644">ACE</div>
<div class="t" style="left:770px;top:567px;font-size:33px;color:#f048c0;font-weight:bold;transform:scaleX(1.18);transform-origin:0 0;-webkit-text-stroke:0.6px #f048c0">5</div>
<div class="t" style="left:790px;top:576px;font-size:20.5px;color:#78d4ee;letter-spacing:0.2px;-webkit-text-stroke:0">studios</div>
<div class="t" style="left:747px;top:599px;font-size:8.8px;letter-spacing:0.45px;color:#bdbdbd;font-style:italic;font-family:'Liberation Serif',serif;-webkit-text-stroke:0.2px #bdbdbd">Aleksey Voznesenski</div>
<div class="t" style="left:1074px;top:41px;font-size:7.0px;color:#d4d4d4;">Layout:</div>
<div class="a" style="left:1101px;top:39.5px;width:83px;height:9.5px;background:#757674;border-radius:1px"></div>
<div class="t" style="left:1104px;top:41px;font-size:7.0px;color:#e4e4e4;">1080p tutorial (User)</div>
<svg style="left:1176px;top:42px;" width="7" height="5" viewBox="0 0 7 5"><path d="M0.5 0.5 L6.5 0.5 L3.5 4 Z" fill="#eee"/></svg>
<svg style="left:1189px;top:40px;" width="9" height="9" viewBox="0 0 9 9"><circle cx="3.5" cy="3.5" r="2.5" fill="none" stroke="#222" stroke-width="1.1"/><path d="M5.5 5.5 L8 8" stroke="#222" stroke-width="1.5"/></svg>
<div class="a" style="left:869px;top:66px;width:330px;height:647px;background:#4a4b49;"></div>
<div class="a" style="left:870.5px;top:66px;width:1px;height:580px;background:#6b6c69;"></div>
<div class="a" style="left:1195.5px;top:66px;width:1px;height:646px;background:#5b5c59;"></div>
<div class="a" style="left:1197.5px;top:37px;width:2.5px;height:676px;background:#2e5676;"></div>
<div class="a" style="left:871px;top:53px;width:31px;height:13px;background:#5d5e5b;"></div>
<div class="t" style="left:874px;top:55.5px;font-size:7.0px;color:#e49a2c;">Objects</div>
<div class="a" style="left:902px;top:53px;width:124.5px;height:13px;background:#393a38;"></div>
<div class="t" style="left:906.5px;top:55.5px;font-size:7.0px;color:#7e7f7c;">Takes</div>
<div class="t" style="left:931px;top:55.5px;font-size:7.0px;color:#7e7f7c;">Content Browser</div>
<div class="a" style="left:989px;top:53px;width:1px;height:13px;background:#4a4b49;"></div>
<div class="t" style="left:993.5px;top:55.5px;font-size:7.0px;color:#7e7f7c;">Structure</div>
<div class="a" style="left:871px;top:66px;width:326px;height:1px;background:#646562;"></div>
<div class="a" style="left:871px;top:67px;width:325px;height:13px;background:#4d4e4c;"></div>
<svg style="left:874px;top:69px;" width="7" height="9" viewBox="0 0 7 9"><path d="M1 0 L1 9 M3.5 0 L3.5 9 M6 0 L6 9" stroke="#6a6b68" stroke-width="1"/></svg>
<div class="t" style="left:887.7px;top:69.8px;font-size:7.0px;color:#d8d8d8;">File</div>
<div class="t" style="left:907px;top:69.8px;font-size:7.0px;color:#d8d8d8;">Edit</div>
<div class="t" style="left:929px;top:69.8px;font-size:7.0px;color:#d8d8d8;">View</div>
<div class="t" style="left:953px;top:69.8px;font-size:7.0px;color:#d8d8d8;">Objects</div>
<div class="t" style="left:986px;top:69.8px;font-size:7.0px;color:#d8d8d8;">Tags</div>
<div class="t" style="left:1010px;top:69.8px;font-size:7.0px;color:#d8d8d8;">Bookmarks</div>
<svg style="left:1153px;top:68px;" width="44" height="11" viewBox="0 0 44 11"><circle cx="4" cy="4" r="2.8" fill="none" stroke="#181818" stroke-width="1.2"/><path d="M6 6 L8.5 9" stroke="#181818" stroke-width="1.6"/><path d="M12 5 L16 1.5 L20 5 L20 9.5 L12 9.5 Z" fill="none" stroke="#181818" stroke-width="1.4"/><ellipse cx="28" cy="5.5" rx="3.5" ry="2" fill="none" stroke="#555" stroke-width="1"/><path d="M35 1 L42 1 M38.5 3 L38.5 10" stroke="#222" stroke-width="1.3"/></svg>
<div class="a" style="left:871px;top:80px;width:325px;height:1px;background:#5a5b58;"></div>
<div class="a" style="left:872px;top:82.0px;width:323px;height:12.45px;background:#4f504e;"></div>
<div class="a" style="left:872px;top:94.45px;width:323px;height:12.45px;background:#4a4b49;"></div>
<div class="a" style="left:872px;top:106.9px;width:323px;height:12.45px;background:#4f504e;"></div>
<div class="a" style="left:872px;top:119.35px;width:323px;height:12.45px;background:#4a4b49;"></div>
<div class="a" style="left:872px;top:131.8px;width:323px;height:12.45px;background:#4f504e;"></div>
<div class="a" style="left:872px;top:144.25px;width:323px;height:12.45px;background:#4a4b49;"></div>
<div class="a" style="left:872px;top:156.7px;width:323px;height:12.45px;background:#4f504e;"></div>
<div class="a" style="left:872px;top:169.14999999999998px;width:323px;height:12.45px;background:#4a4b49;"></div>
<div class="a" style="left:872px;top:181.6px;width:323px;height:12.45px;background:#4f504e;"></div>
<div class="a" style="left:872px;top:194.05px;width:323px;height:12.45px;background:#4a4b49;"></div>
<div class="a" style="left:872px;top:206.5px;width:323px;height:12.45px;background:#4f504e;"></div>
<div class="a" style="left:872px;top:218.95px;width:323px;height:12.45px;background:#4a4b49;"></div>
<div class="a" style="left:872px;top:231.39999999999998px;width:323px;height:12.45px;background:#4f504e;"></div>
<div class="a" style="left:872px;top:243.85px;width:323px;height:12.45px;background:#4a4b49;"></div>
<div class="a" style="left:872px;top:256.29999999999995px;width:323px;height:12.45px;background:#4f504e;"></div>
<div class="a" style="left:872px;top:268.75px;width:323px;height:12.45px;background:#4a4b49;"></div>
<div class="a" style="left:872px;top:281.2px;width:323px;height:12.45px;background:#4f504e;"></div>
<div class="a" style="left:872px;top:293.65px;width:323px;height:12.45px;background:#4a4b49;"></div>
<div class="a" style="left:893px;top:82px;width:34px;height:12.4px;background:#454a52;"></div>
<div class="a" style="left:937.5px;top:81px;width:1px;height:226px;background:#3c3d3b;"></div>
<div class="a" style="left:961.5px;top:81px;width:1px;height:226px;background:#3c3d3b;"></div>
<div class="a" style="left:876.5px;top:84px;width:1px;height:192px;background:#6a6b68;"></div>
<svg style="left:873.5px;top:84.8px;" width="7" height="7" viewBox="0 0 7 7"><rect x="0.5" y="0.5" width="6" height="6" fill="none" stroke="#777" stroke-width="0.8"/><path d="M2 3.5 L5 3.5 M3.5 2 L3.5 5" stroke="#888" stroke-width="0.8"/></svg>
<svg style="left:881.5px;top:82.8px;" width="11" height="11" viewBox="0 0 11 11"><circle cx="3" cy="3" r="2" fill="#ddd"/><circle cx="7" cy="3" r="2" fill="#ddd"/><rect x="1" y="5" width="8" height="4" fill="#111"/><path d="M9 6 L11 5 L11 9 L9 8Z" fill="#111"/></svg>
<div class="t" style="left:894px;top:84.7px;font-size:7.0px;color:#c98a3a;">Camera.1</div>
<svg style="left:939.5px;top:84.3px;" width="8" height="8" viewBox="0 0 8 8"><rect x="0" y="0" width="8" height="8" fill="#7d7e7b"/><path d="M1 7 L7 1" stroke="#a8a9a6" stroke-width="1.2"/></svg>
<svg style="left:949.5px;top:83.8px;" width="4" height="9" viewBox="0 0 4 9"><circle cx="2" cy="2" r="1.2" fill="#8a8b88"/><circle cx="2" cy="6.5" r="1.2" fill="#8a8b88"/></svg>
<svg style="left:954px;top:84.3px;" width="8" height="8" viewBox="0 0 8 8"><rect width="8" height="8" fill="#333"/><path d="M0 0h2v2h-2zM4 0h2v2h-2zM2 2h2v2h-2zM6 2h2v2h-2zM0 4h2v2h-2zM4 4h2v2h-2zM2 6h2v2h-2zM6 6h2v2h-2z" fill="#eee"/></svg>
<div class="a" style="left:877px;top:100.75px;width:4px;height:1px;background:#6a6b68;"></div>
<svg style="left:881px;top:94.25px;" width="6" height="8" viewBox="0 0 6 8"><path d="M0.5 0 L0.5 6.5 L6 6.5" stroke="#777" stroke-width="0.8" fill="none"/></svg>
<svg style="left:887px;top:95.25px;" width="11" height="11" viewBox="0 0 11 11"><path d="M1.5 1 L1.5 9.5 L9.5 9.5" stroke="#e8e8e8" stroke-width="1.5" fill="none"/><circle cx="6.5" cy="4" r="2.4" fill="#333" stroke="#eee" stroke-width="1.1"/></svg>
<div class="t" style="left:900px;top:97.15px;font-size:7.0px;color:#e2b63a;font-weight:bold">Null</div>
<svg style="left:939.5px;top:96.75px;" width="8" height="8" viewBox="0 0 8 8"><rect x="0" y="0" width="8" height="8" fill="#7d7e7b"/><path d="M1 7 L7 1" stroke="#a8a9a6" stroke-width="1.2"/></svg>
<svg style="left:949.5px;top:96.25px;" width="4" height="9" viewBox="0 0 4 9"><circle cx="2" cy="2" r="1.2" fill="#8a8b88"/><circle cx="2" cy="6.5" r="1.2" fill="#8a8b88"/></svg>
<div class="a" style="left:877px;top:113.19999999999999px;width:4px;height:1px;background:#6a6b68;"></div>
<svg style="left:881.5px;top:107.69999999999999px;" width="11" height="11" viewBox="0 0 11 11"><circle cx="3" cy="3" r="2" fill="#ddd"/><circle cx="7" cy="3" r="2" fill="#ddd"/><rect x="1" y="5" width="8" height="4" fill="#111"/><path d="M9 6 L11 5 L11 9 L9 8Z" fill="#111"/></svg>
<div class="t" style="left:894px;top:109.6px;font-size:7.0px;color:#c4c4c4;">bad camera</div>
<svg style="left:939.5px;top:109.19999999999999px;" width="8" height="8" viewBox="0 0 8 8"><rect x="0" y="0" width="8" height="8" fill="#7d7e7b"/><path d="M1 7 L7 1" stroke="#a8a9a6" stroke-width="1.2"/></svg>
<svg style="left:949.5px;top:108.69999999999999px;" width="4" height="9" viewBox="0 0 4 9"><circle cx="2" cy="2" r="1.2" fill="#e05070"/><circle cx="2" cy="6.5" r="1.2" fill="#8a8b88"/></svg>
<svg style="left:954px;top:109.19999999999999px;" width="8" height="8" viewBox="0 0 8 8"><path d="M0 0h2v2h-2zM4 0h2v2h-2zM2 2h2v2h-2zM6 2h2v2h-2zM0 4h2v2h-2zM4 4h2v2h-2zM2 6h2v2h-2zM6 6h2v2h-2z" fill="#222"/></svg>
<div class="a" style="left:877px;top:125.64999999999999px;width:4px;height:1px;background:#6a6b68;"></div>
<svg style="left:881.5px;top:120.14999999999999px;" width="11" height="11" viewBox="0 0 11 11"><path d="M1.5 3 L5.5 1 L9.5 3 L9.5 8 L5.5 10 L1.5 8 Z" fill="#4fa2e8" stroke="#9fd0ff" stroke-width="0.6"/></svg>
<div class="t" style="left:894px;top:122.05px;font-size:7.0px;color:#c4c4c4;">glass cube</div>
<svg style="left:939.5px;top:121.64999999999999px;" width="8" height="8" viewBox="0 0 8 8"><rect x="0" y="0" width="8" height="8" fill="#7d7e7b"/><path d="M1 7 L7 1" stroke="#a8a9a6" stroke-width="1.2"/></svg>
<svg style="left:949.5px;top:121.14999999999999px;" width="4" height="9" viewBox="0 0 4 9"><circle cx="2" cy="2" r="1.2" fill="#8a8b88"/><circle cx="2" cy="6.5" r="1.2" fill="#8a8b88"/></svg>
<svg style="left:954px;top:122.14999999999999px;" width="7" height="7" viewBox="0 0 7 7"><path d="M1 1 L6 6 M6 1 L1 6" stroke="#e05060" stroke-width="1.5"/></svg>
<div class="a" style="left:877px;top:138.1px;width:4px;height:1px;background:#6a6b68;"></div>
<svg style="left:881.5px;top:132.6px;" width="11" height="11" viewBox="0 0 11 11"><path d="M2 2 L9 2 L5.5 10 Z" fill="#e8e8e8"/></svg>
<div class="t" style="left:894px;top:134.5px;font-size:7.0px;color:#c4c4c4;">Light.1</div>
<svg style="left:939.5px;top:134.1px;" width="8" height="8" viewBox="0 0 8 8"><rect x="0" y="0" width="8" height="8" fill="#7d7e7b"/><path d="M1 7 L7 1" stroke="#a8a9a6" stroke-width="1.2"/></svg>
<svg style="left:949.5px;top:133.6px;" width="4" height="9" viewBox="0 0 4 9"><circle cx="2" cy="2" r="1.2" fill="#8a8b88"/><circle cx="2" cy="6.5" r="1.2" fill="#8a8b88"/></svg>
<svg style="left:953.5px;top:134.6px;" width="8" height="7" viewBox="0 0 8 7"><path d="M0.5 4 L3 6.5 L7.5 0.5" stroke="#38c070" stroke-width="1.3" fill="none"/></svg>
<div class="a" style="left:877px;top:150.55px;width:4px;height:1px;background:#6a6b68;"></div>
<svg style="left:881.5px;top:145.05px;" width="11" height="11" viewBox="0 0 11 11"><circle cx="3" cy="3" r="2" fill="#ddd"/><circle cx="7" cy="3" r="2" fill="#ddd"/><rect x="1" y="5" width="8" height="4" fill="#111"/><path d="M9 6 L11 5 L11 9 L9 8Z" fill="#111"/></svg>
<div class="t" style="left:894px;top:146.95000000000002px;font-size:7.0px;color:#c4c4c4;">Camera</div>
<svg style="left:939.5px;top:146.55px;" width="8" height="8" viewBox="0 0 8 8"><rect x="0" y="0" width="8" height="8" fill="#7d7e7b"/><path d="M1 7 L7 1" stroke="#a8a9a6" stroke-width="1.2"/></svg>
<svg style="left:949.5px;top:146.05px;" width="4" height="9" viewBox="0 0 4 9"><circle cx="2" cy="2" r="1.2" fill="#e05070"/><circle cx="2" cy="6.5" r="1.2" fill="#e05070"/></svg>
<svg style="left:954px;top:146.55px;" width="8" height="8" viewBox="0 0 8 8"><path d="M0 0h2v2h-2zM4 0h2v2h-2zM2 2h2v2h-2zM6 2h2v2h-2zM0 4h2v2h-2zM4 4h2v2h-2zM2 6h2v2h-2zM6 6h2v2h-2z" fill="#222"/></svg>
<div class="a" style="left:877px;top:163.0px;width:4px;height:1px;background:#6a6b68;"></div>
<svg style="left:881.5px;top:157.5px;" width="11" height="11" viewBox="0 0 11 11"><rect x="0.5" y="0.5" width="10" height="10" fill="#e8e8e8"/><path d="M2 10 L10 2" stroke="#111" stroke-width="2.2"/><path d="M0.5 0.5 L4 0.5 L0.5 4Z" fill="#111"/></svg>
<div class="t" style="left:894px;top:159.4px;font-size:7.0px;color:#c4c4c4;">Light</div>
<svg style="left:939.5px;top:159.0px;" width="8" height="8" viewBox="0 0 8 8"><rect x="0" y="0" width="8" height="8" fill="#7d7e7b"/><path d="M1 7 L7 1" stroke="#a8a9a6" stroke-width="1.2"/></svg>
<svg style="left:949.5px;top:158.5px;" width="4" height="9" viewBox="0 0 4 9"><circle cx="2" cy="2" r="1.2" fill="#8a8b88"/><circle cx="2" cy="6.5" r="1.2" fill="#8a8b88"/></svg>
<svg style="left:953.5px;top:159.5px;" width="8" height="7" viewBox="0 0 8 7"><path d="M0.5 4 L3 6.5 L7.5 0.5" stroke="#38c070" stroke-width="1.3" fill="none"/></svg>
<div class="a" style="left:877px;top:175.45px;width:4px;height:1px;background:#6a6b68;"></div>
<svg style="left:881.5px;top:169.95px;" width="11" height="11" viewBox="0 0 11 11"><circle cx="5.5" cy="5.5" r="4.5" fill="#9ab4d4" stroke="#c8d8ee" stroke-width="0.6"/></svg>
<div class="t" style="left:894px;top:171.85px;font-size:7.0px;color:#c4c4c4;">Sky</div>
<svg style="left:939.5px;top:171.45px;" width="8" height="8" viewBox="0 0 8 8"><rect x="0" y="0" width="8" height="8" fill="#7d7e7b"/><path d="M1 7 L7 1" stroke="#a8a9a6" stroke-width="1.2"/></svg>
<svg style="left:949.5px;top:170.95px;" width="4" height="9" viewBox="0 0 4 9"><circle cx="2" cy="2" r="1.2" fill="#8a8b88"/><circle cx="2" cy="6.5" r="1.2" fill="#8a8b88"/></svg>
<svg style="left:873.5px;top:184.39999999999998px;" width="7" height="7" viewBox="0 0 7 7"><rect x="0.5" y="0.5" width="6" height="6" fill="none" stroke="#777" stroke-width="0.8"/><path d="M2 3.5 L5 3.5 M3.5 2 L3.5 5" stroke="#888" stroke-width="0.8"/></svg>
<svg style="left:881.5px;top:182.39999999999998px;" width="11" height="11" viewBox="0 0 11 11"><path d="M0.5 6 L5 2.5 L11 3.5 L6.5 8 Z" fill="#6aaae8" stroke="#b0d8ff" stroke-width="0.5"/></svg>
<div class="t" style="left:894px;top:184.29999999999998px;font-size:7.0px;color:#c4c4c4;">Plane</div>
<div class="a" style="left:939.5px;top:183.89999999999998px;width:8px;height:8px;background:#7ee81e;"></div>
<svg style="left:949.5px;top:183.39999999999998px;" width="4" height="9" viewBox="0 0 4 9"><circle cx="2" cy="2" r="1.2" fill="#8a8b88"/><circle cx="2" cy="6.5" r="1.2" fill="#8a8b88"/></svg>
<svg style="left:953.5px;top:184.39999999999998px;" width="8" height="7" viewBox="0 0 8 7"><path d="M0.5 4 L3 6.5 L7.5 0.5" stroke="#38c070" stroke-width="1.3" fill="none"/></svg>
<svg style="left:873.5px;top:196.85px;" width="7" height="7" viewBox="0 0 7 7"><rect x="0.5" y="0.5" width="6" height="6" fill="none" stroke="#777" stroke-width="0.8"/><path d="M2 3.5 L5 3.5 M3.5 2 L3.5 5" stroke="#888" stroke-width="0.8"/></svg>
<svg style="left:881.5px;top:194.85px;" width="11" height="11" viewBox="0 0 11 11"><path d="M1.5 1 L1.5 9.5 L9.5 9.5" stroke="#e8e8e8" stroke-width="1.5" fill="none"/><circle cx="6.5" cy="4" r="2.4" fill="#333" stroke="#eee" stroke-width="1.1"/></svg>
<div class="t" style="left:894px;top:196.75px;font-size:7.0px;color:#c4c4c4;">Stuff</div>
<div class="a" style="left:939.5px;top:196.35px;width:8px;height:8px;background:#6a1aa8;"></div>
<svg style="left:949.5px;top:195.85px;" width="4" height="9" viewBox="0 0 4 9"><circle cx="2" cy="2" r="1.2" fill="#8a8b88"/><circle cx="2" cy="6.5" r="1.2" fill="#8a8b88"/></svg>
<svg style="left:873.5px;top:209.3px;" width="7" height="7" viewBox="0 0 7 7"><rect x="0.5" y="0.5" width="6" height="6" fill="none" stroke="#777" stroke-width="0.8"/><path d="M2 3.5 L5 3.5 M3.5 2 L3.5 5" stroke="#888" stroke-width="0.8"/></svg>
<svg style="left:881.5px;top:207.3px;" width="11" height="11" viewBox="0 0 11 11"><path d="M1.5 1 L1.5 9.5 L9.5 9.5" stroke="#e8e8e8" stroke-width="1.5" fill="none"/><circle cx="6.5" cy="4" r="2.4" fill="#333" stroke="#eee" stroke-width="1.1"/></svg>
<div class="t" style="left:894px;top:209.20000000000002px;font-size:7.0px;color:#c4c4c4;">shirt_shorts</div>
<svg style="left:939.5px;top:208.8px;" width="8" height="8" viewBox="0 0 8 8"><rect x="0" y="0" width="8" height="8" fill="#7d7e7b"/><path d="M1 7 L7 1" stroke="#a8a9a6" stroke-width="1.2"/></svg>
<svg style="left:949.5px;top:208.3px;" width="4" height="9" viewBox="0 0 4 9"><circle cx="2" cy="2" r="1.2" fill="#8a8b88"/><circle cx="2" cy="6.5" r="1.2" fill="#8a8b88"/></svg>
<svg style="left:873.5px;top:221.75px;" width="7" height="7" viewBox="0 0 7 7"><rect x="0.5" y="0.5" width="6" height="6" fill="none" stroke="#777" stroke-width="0.8"/><path d="M2 3.5 L5 3.5 M3.5 2 L3.5 5" stroke="#888" stroke-width="0.8"/></svg>
<svg style="left:881.5px;top:219.75px;" width="11" height="11" viewBox="0 0 11 11"><path d="M1.5 1 L1.5 9.5 L9.5 9.5" stroke="#e8e8e8" stroke-width="1.5" fill="none"/><circle cx="6.5" cy="4" r="2.4" fill="#333" stroke="#eee" stroke-width="1.1"/></svg>
<div class="t" style="left:894px;top:221.65px;font-size:7.0px;color:#c4c4c4;">pants_tshirt</div>
<svg style="left:939.5px;top:221.25px;" width="8" height="8" viewBox="0 0 8 8"><rect x="0" y="0" width="8" height="8" fill="#7d7e7b"/><path d="M1 7 L7 1" stroke="#a8a9a6" stroke-width="1.2"/></svg>
<svg style="left:949.5px;top:220.75px;" width="4" height="9" viewBox="0 0 4 9"><circle cx="2" cy="2" r="1.2" fill="#8a8b88"/><circle cx="2" cy="6.5" r="1.2" fill="#8a8b88"/></svg>
<svg style="left:873.5px;top:234.2px;" width="7" height="7" viewBox="0 0 7 7"><rect x="0.5" y="0.5" width="6" height="6" fill="none" stroke="#777" stroke-width="0.8"/><path d="M2 3.5 L5 3.5 M3.5 2 L3.5 5" stroke="#888" stroke-width="0.8"/></svg>
<svg style="left:881.5px;top:232.2px;" width="11" height="11" viewBox="0 0 11 11"><path d="M1.5 1 L1.5 9.5 L9.5 9.5" stroke="#e8e8e8" stroke-width="1.5" fill="none"/><circle cx="6.5" cy="4" r="2.4" fill="#333" stroke="#eee" stroke-width="1.1"/></svg>
<div class="t" style="left:894px;top:234.1px;font-size:7.0px;color:#c4c4c4;">Jacket_tie</div>
<svg style="left:939.5px;top:233.7px;" width="8" height="8" viewBox="0 0 8 8"><rect x="0" y="0" width="8" height="8" fill="#7d7e7b"/><path d="M1 7 L7 1" stroke="#a8a9a6" stroke-width="1.2"/></svg>
<svg style="left:949.5px;top:233.2px;" width="4" height="9" viewBox="0 0 4 9"><circle cx="2" cy="2" r="1.2" fill="#8a8b88"/><circle cx="2" cy="6.5" r="1.2" fill="#8a8b88"/></svg>
<svg style="left:873.5px;top:246.64999999999998px;" width="7" height="7" viewBox="0 0 7 7"><rect x="0.5" y="0.5" width="6" height="6" fill="none" stroke="#777" stroke-width="0.8"/><path d="M2 3.5 L5 3.5 M3.5 2 L3.5 5" stroke="#888" stroke-width="0.8"/></svg>
<svg style="left:881.5px;top:244.64999999999998px;" width="11" height="11" viewBox="0 0 11 11"><path d="M1.5 1 L1.5 9.5 L9.5 9.5" stroke="#e8e8e8" stroke-width="1.5" fill="none"/><circle cx="6.5" cy="4" r="2.4" fill="#333" stroke="#eee" stroke-width="1.1"/></svg>
<div class="t" style="left:894px;top:246.54999999999998px;font-size:7.0px;color:#c4c4c4;">pants_jacket</div>
<svg style="left:939.5px;top:246.14999999999998px;" width="8" height="8" viewBox="0 0 8 8"><rect x="0" y="0" width="8" height="8" fill="#7d7e7b"/><path d="M1 7 L7 1" stroke="#a8a9a6" stroke-width="1.2"/></svg>
<svg style="left:949.5px;top:245.64999999999998px;" width="4" height="9" viewBox="0 0 4 9"><circle cx="2" cy="2" r="1.2" fill="#8a8b88"/><circle cx="2" cy="6.5" r="1.2" fill="#8a8b88"/></svg>
<svg style="left:873.5px;top:259.09999999999997px;" width="7" height="7" viewBox="0 0 7 7"><rect x="0.5" y="0.5" width="6" height="6" fill="none" stroke="#777" stroke-width="0.8"/><path d="M2 3.5 L5 3.5 M3.5 2 L3.5 5" stroke="#888" stroke-width="0.8"/></svg>
<svg style="left:881.5px;top:257.09999999999997px;" width="11" height="11" viewBox="0 0 11 11"><path d="M1.5 1 L1.5 9.5 L9.5 9.5" stroke="#e8e8e8" stroke-width="1.5" fill="none"/><circle cx="6.5" cy="4" r="2.4" fill="#333" stroke="#eee" stroke-width="1.1"/></svg>
<div class="t" style="left:894px;top:258.99999999999994px;font-size:7.0px;color:#c4c4c4;">simple_body</div>
<svg style="left:939.5px;top:258.59999999999997px;" width="8" height="8" viewBox="0 0 8 8"><rect x="0" y="0" width="8" height="8" fill="#7d7e7b"/><path d="M1 7 L7 1" stroke="#a8a9a6" stroke-width="1.2"/></svg>
<svg style="left:949.5px;top:258.09999999999997px;" width="4" height="9" viewBox="0 0 4 9"><circle cx="2" cy="2" r="1.2" fill="#8a8b88"/><circle cx="2" cy="6.5" r="1.2" fill="#8a8b88"/></svg>
<svg style="left:873.5px;top:271.55px;" width="7" height="7" viewBox="0 0 7 7"><rect x="0.5" y="0.5" width="6" height="6" fill="none" stroke="#777" stroke-width="0.8"/><path d="M2 3.5 L5 3.5 M3.5 2 L3.5 5" stroke="#888" stroke-width="0.8"/></svg>
<svg style="left:881.5px;top:269.55px;" width="11" height="11" viewBox="0 0 11 11"><path d="M1.5 1 L1.5 9.5 L9.5 9.5" stroke="#e8e8e8" stroke-width="1.5" fill="none"/><circle cx="6.5" cy="4" r="2.4" fill="#333" stroke="#eee" stroke-width="1.1"/></svg>
<div class="t" style="left:894px;top:271.45px;font-size:7.0px;color:#c4c4c4;">Boy_shorts</div>
<svg style="left:939.5px;top:271.05px;" width="8" height="8" viewBox="0 0 8 8"><rect x="0" y="0" width="8" height="8" fill="#7d7e7b"/><path d="M1 7 L7 1" stroke="#a8a9a6" stroke-width="1.2"/></svg>
<svg style="left:949.5px;top:270.55px;" width="4" height="9" viewBox="0 0 4 9"><circle cx="2" cy="2" r="1.2" fill="#8a8b88"/><circle cx="2" cy="6.5" r="1.2" fill="#8a8b88"/></svg>
<svg style="left:964px;top:120.64999999999999px;" width="10" height="10" viewBox="0 0 10 10"><circle cx="2.5" cy="2.5" r="1.7" fill="#f0a030"/><circle cx="7" cy="7" r="1.9" fill="#f0a030"/></svg>
<svg style="left:976px;top:120.14999999999999px;" width="11" height="11" viewBox="0 0 11 11"><rect width="11" height="11" fill="#9a9b98"/><path d="M0 9 L9 0 M2 11 L11 2 M5 11 L11 5" stroke="#d8d8d8" stroke-width="1.1"/></svg>
<svg style="left:963px;top:169.95px;" width="11" height="11" viewBox="0 0 11 11"><rect x="0" y="0" width="11" height="11" fill="#777" opacity="0.35"/><circle cx="5.5" cy="5.5" r="4.6" fill="#e8e8e8"/><circle cx="4" cy="4" r="1.5" fill="#fff" opacity="0.6"/></svg>
<svg style="left:963px;top:184.89999999999998px;" width="8" height="6" viewBox="0 0 8 6"><rect width="8" height="5" rx="1.5" fill="#e07a1a"/><circle cx="4" cy="2.5" r="1.2" fill="#222"/></svg>
<svg style="left:976px;top:182.89999999999998px;" width="9" height="10" viewBox="0 0 9 10"><circle cx="2" cy="2.5" r="1.6" fill="#f0a030"/><circle cx="6.5" cy="7" r="1.8" fill="#f0a030"/></svg>
<svg style="left:987.5px;top:182.39999999999998px;" width="11" height="11" viewBox="0 0 11 11"><rect x="0" y="0" width="11" height="11" fill="#777" opacity="0.35"/><circle cx="5.5" cy="5.5" r="4.6" fill="#e8e8e8"/><circle cx="4" cy="4" r="1.5" fill="#fff" opacity="0.6"/></svg>
<svg style="left:999.9px;top:182.39999999999998px;" width="11" height="11" viewBox="0 0 11 11"><rect x="0" y="0" width="11" height="11" fill="#777" opacity="0.35"/><circle cx="5.5" cy="5.5" r="4.6" fill="#353845"/><circle cx="4" cy="4" r="1.5" fill="#fff" opacity="0.6"/></svg>
<svg style="left:1012.3px;top:182.39999999999998px;" width="11" height="11" viewBox="0 0 11 11"><rect x="0" y="0" width="11" height="11" fill="#777" opacity="0.35"/><circle cx="5.5" cy="5.5" r="4.6" fill="#4a8ec8"/><circle cx="4" cy="4" r="1.5" fill="#fff" opacity="0.6"/></svg>
<svg style="left:1024.7px;top:182.39999999999998px;" width="11" height="11" viewBox="0 0 11 11"><rect x="0" y="0" width="11" height="11" fill="#777" opacity="0.35"/><circle cx="5.5" cy="5.5" r="4.6" fill="#5aa0e0"/><circle cx="4" cy="4" r="1.5" fill="#fff" opacity="0.6"/></svg>
<svg style="left:1037.1px;top:182.39999999999998px;" width="11" height="11" viewBox="0 0 11 11"><rect x="0" y="0" width="11" height="11" fill="#777" opacity="0.35"/><circle cx="5.5" cy="5.5" r="4.6" fill="#d8d8d8"/><circle cx="4" cy="4" r="1.5" fill="#fff" opacity="0.6"/></svg>
<svg style="left:963px;top:194.85px;" width="11" height="11" viewBox="0 0 11 11"><rect x="0" y="0" width="11" height="11" fill="#777" opacity="0.35"/><circle cx="5.5" cy="5.5" r="4.6" fill="#e8e8e8"/><circle cx="4" cy="4" r="1.5" fill="#fff" opacity="0.6"/></svg>
<div class="a" style="left:871px;top:307.5px;width:325px;height:1px;background:#5e5f5c;"></div>
<div class="a" style="left:871px;top:308px;width:325px;height:4px;background:#4a4b49;"></div>
<div class="a" style="left:871px;top:312px;width:38px;height:12px;background:#5d5e5b;"></div>
<div class="t" style="left:874px;top:314.3px;font-size:7.0px;color:#e49a2c;">Attributes</div>
<div class="a" style="left:910px;top:312px;width:64px;height:12px;background:#3b3c3a;"></div>
<div class="t" style="left:913px;top:314.3px;font-size:7.0px;color:#7a7b78;">Layers</div>
<div class="t" style="left:940.5px;top:314.3px;font-size:7.0px;color:#7a7b78;">Materials</div>
<div class="a" style="left:936px;top:312px;width:1px;height:12px;background:#4a4b49;"></div>
<div class="a" style="left:871px;top:324px;width:325px;height:1px;background:#646562;"></div>
<div class="a" style="left:871px;top:325px;width:325px;height:14px;background:#4d4e4c;"></div>
<svg style="left:874.5px;top:327px;" width="7" height="9" viewBox="0 0 7 9"><path d="M1 0 L1 9 M3.5 0 L3.5 9 M6 0 L6 9" stroke="#6a6b68" stroke-width="1"/></svg>
<div class="t" style="left:887.7px;top:328.5px;font-size:7.0px;color:#d8d8d8;">Mode</div>
<div class="t" style="left:915.4px;top:328.5px;font-size:7.0px;color:#d8d8d8;">Edit</div>
<div class="t" style="left:936.2px;top:328.5px;font-size:7.0px;color:#d8d8d8;">User Data</div>
<svg style="left:1111px;top:327px;" width="88" height="10" viewBox="0 0 88 10"><path d="M0 5 L10 1 L7 5 L10 9 Z" fill="#181818"/><path d="M13 9 L22 3" stroke="#555" stroke-width="1"/><path d="M28 9 L32 1 L36 9 L32 7 Z" fill="#181818"/><circle cx="45" cy="4" r="2.6" fill="none" stroke="#181818" stroke-width="1.1"/><path d="M47 6 L49 9" stroke="#181818" stroke-width="1.4"/><path d="M55 9 L55 4 Q58 0 61 4 L61 9 Z" fill="none" stroke="#333" stroke-width="1"/><circle cx="68" cy="5" r="3.5" fill="none" stroke="#333" stroke-width="1.1"/><rect x="76" y="1" width="7" height="8" fill="none" stroke="#333" stroke-width="1"/><path d="M79.5 3 L79.5 7" stroke="#333"/></svg>
<div class="a" style="left:871px;top:339px;width:325px;height:1px;background:#5a5b58;"></div>
<svg style="left:874px;top:342px;" width="12" height="11" viewBox="0 0 12 11"><path d="M1 1 L1 9.5 L10 9.5" stroke="#eee" stroke-width="1.6" fill="none"/><circle cx="7" cy="4" r="2.8" fill="#3a4048" stroke="#eee" stroke-width="1.1"/></svg>
<div class="t" style="left:888.5px;top:343.3px;font-size:7.0px;color:#c8c8c8;">Null [Null]</div>
<div class="a" style="left:874px;top:356px;width:25px;height:10px;background:#666764;"></div>
<div class="t" style="left:877px;top:357.6px;font-size:7.0px;color:#b8b8b8;">Basic</div>
<div class="a" style="left:900px;top:356px;width:25px;height:10px;background:#666764;"></div>
<div class="t" style="left:902.5px;top:357.6px;font-size:7.0px;color:#b8b8b8;">Coord.</div>
<div class="a" style="left:926.5px;top:356px;width:26px;height:10px;background:#a9b8dc;"></div>
<div class="t" style="left:928.7px;top:357.6px;font-size:7.0px;color:#1a2a55;">Object</div>
<div class="a" style="left:871px;top:369px;width:325px;height:10px;background:#3d3e3c;"></div>
<div class="t" style="left:874px;top:370.6px;font-size:7.0px;color:#d8d8d8;font-weight:bold">Object Properties</div>
<svg style="left:874px;top:383px;" width="9" height="9" viewBox="0 0 9 9"><circle cx="4.5" cy="4.5" r="3.7" fill="none" stroke="#999" stroke-width="0.9"/><circle cx="4.5" cy="4.5" r="1.3" fill="#bbb"/></svg>
<div class="t" style="left:885px;top:384px;font-size:7.0px;color:#cfcfcf;">Display . . . .</div>
<div class="a" style="left:928.5px;top:383px;width:90px;height:9px;background:#767775;border-radius:1px"></div>
<div class="t" style="left:933px;top:384.2px;font-size:7.0px;color:#e8e8e8;">Dot</div>
<svg style="left:1011px;top:385.5px;" width="6" height="4" viewBox="0 0 6 4"><path d="M0 0 L6 0 L3 3.5 Z" fill="#eee"/></svg>
<svg style="left:875px;top:396.2px;" width="7" height="7" viewBox="0 0 7 7"><path d="M1 4 L3 6 L6 1" stroke="#666" stroke-width="0.9" fill="none"/></svg>
<div class="t" style="left:885px;top:396.09999999999997px;font-size:7.0px;color:#7a7b78;">Radius . . . .</div>
<div class="a" style="left:928.5px;top:395.2px;width:40px;height:9px;background:#555654;border-radius:1px"></div>
<div class="t" style="left:932px;top:396.09999999999997px;font-size:7.0px;color:#6e6f6c;">10 cm</div>
<svg style="left:875px;top:408.5px;" width="7" height="7" viewBox="0 0 7 7"><path d="M1 4 L3 6 L6 1" stroke="#666" stroke-width="0.9" fill="none"/></svg>
<div class="t" style="left:885px;top:408.4px;font-size:7.0px;color:#7a7b78;">Aspect Ratio</div>
<div class="a" style="left:928.5px;top:407.5px;width:40px;height:9px;background:#555654;border-radius:1px"></div>
<div class="t" style="left:932px;top:408.4px;font-size:7.0px;color:#6e6f6c;">1</div>
<svg style="left:875px;top:420.8px;" width="7" height="7" viewBox="0 0 7 7"><path d="M1 4 L3 6 L6 1" stroke="#666" stroke-width="0.9" fill="none"/></svg>
<div class="t" style="left:885px;top:420.7px;font-size:7.0px;color:#7a7b78;">Orientation</div>
<div class="a" style="left:928.5px;top:419.8px;width:90px;height:9px;background:#555654;border-radius:1px"></div>
<div class="t" style="left:932px;top:420.7px;font-size:7.0px;color:#6e6f6c;">Camera</div>
<div class="a" style="left:871px;top:639px;width:325px;height:1px;background:#3c3d3b;"></div>
<div class="a" style="left:871px;top:640px;width:325px;height:12px;background:#4d4e4c;"></div>
<div class="a" style="left:874px;top:642.5px;width:7px;height:7px;background:#5e5f5c;"></div>
<div class="t" style="left:885.5px;top:643px;font-size:7.0px;color:#b8b8b8;">Position</div>
<div class="t" style="left:990px;top:643px;font-size:7.0px;color:#b8b8b8;">Size</div>
<div class="t" style="left:1095.5px;top:643px;font-size:7.0px;color:#b8b8b8;">Rotation</div>
<div class="t" style="left:873.5px;top:658.0px;font-size:7.0px;color:#a8a9a6;">X</div>
<div class="a" style="left:880px;top:656.6px;width:98px;height:10px;background:#3a3b39;border-radius:1px"></div>
<div class="t" style="left:883px;top:658.0px;font-size:7.0px;color:#c8c8c8;">0 cm</div>
<div class="t" style="left:973px;top:657.8000000000001px;font-size:6px;color:#8a8b88;">⇕</div>
<div class="t" style="left:980px;top:658.0px;font-size:7.0px;color:#a8a9a6;">X</div>
<div class="a" style="left:987px;top:656.6px;width:98px;height:10px;background:#3a3b39;border-radius:1px"></div>
<div class="t" style="left:990px;top:658.0px;font-size:7.0px;color:#c8c8c8;">0 cm</div>
<div class="t" style="left:1080px;top:657.8000000000001px;font-size:6px;color:#8a8b88;">⇕</div>
<div class="t" style="left:1086px;top:658.0px;font-size:7.0px;color:#a8a9a6;">H</div>
<div class="a" style="left:1094px;top:656.6px;width:101px;height:10px;background:#3a3b39;border-radius:1px"></div>
<div class="t" style="left:1097px;top:658.0px;font-size:7.0px;color:#c8c8c8;">0 °</div>
<div class="t" style="left:1190px;top:657.8000000000001px;font-size:6px;color:#8a8b88;">⇕</div>
<div class="t" style="left:873.5px;top:670.6px;font-size:7.0px;color:#a8a9a6;">Y</div>
<div class="a" style="left:880px;top:669.2px;width:98px;height:10px;background:#3a3b39;border-radius:1px"></div>
<div class="t" style="left:883px;top:670.6px;font-size:7.0px;color:#c8c8c8;">0 cm</div>
<div class="t" style="left:973px;top:670.4000000000001px;font-size:6px;color:#8a8b88;">⇕</div>
<div class="t" style="left:980px;top:670.6px;font-size:7.0px;color:#a8a9a6;">Y</div>
<div class="a" style="left:987px;top:669.2px;width:98px;height:10px;background:#3a3b39;border-radius:1px"></div>
<div class="t" style="left:990px;top:670.6px;font-size:7.0px;color:#c8c8c8;">0 cm</div>
<div class="t" style="left:1080px;top:670.4000000000001px;font-size:6px;color:#8a8b88;">⇕</div>
<div class="t" style="left:1086px;top:670.6px;font-size:7.0px;color:#a8a9a6;">P</div>
<div class="a" style="left:1094px;top:669.2px;width:101px;height:10px;background:#3a3b39;border-radius:1px"></div>
<div class="t" style="left:1097px;top:670.6px;font-size:7.0px;color:#c8c8c8;">0 °</div>
<div class="t" style="left:1190px;top:670.4000000000001px;font-size:6px;color:#8a8b88;">⇕</div>
<div class="t" style="left:873.5px;top:683.2px;font-size:7.0px;color:#a8a9a6;">Z</div>
<div class="a" style="left:880px;top:681.8000000000001px;width:98px;height:10px;background:#3a3b39;border-radius:1px"></div>
<div class="t" style="left:883px;top:683.2px;font-size:7.0px;color:#c8c8c8;">0 cm</div>
<div class="t" style="left:973px;top:683.0000000000001px;font-size:6px;color:#8a8b88;">⇕</div>
<div class="t" style="left:980px;top:683.2px;font-size:7.0px;color:#a8a9a6;">Z</div>
<div class="a" style="left:987px;top:681.8000000000001px;width:98px;height:10px;background:#3a3b39;border-radius:1px"></div>
<div class="t" style="left:990px;top:683.2px;font-size:7.0px;color:#c8c8c8;">0 cm</div>
<div class="t" style="left:1080px;top:683.0000000000001px;font-size:6px;color:#8a8b88;">⇕</div>
<div class="t" style="left:1086px;top:683.2px;font-size:7.0px;color:#a8a9a6;">B</div>
<div class="a" style="left:1094px;top:681.8000000000001px;width:101px;height:10px;background:#3a3b39;border-radius:1px"></div>
<div class="t" style="left:1097px;top:683.2px;font-size:7.0px;color:#c8c8c8;">0 °</div>
<div class="t" style="left:1190px;top:683.0000000000001px;font-size:6px;color:#8a8b88;">⇕</div>
<div class="a" style="left:880px;top:696px;width:98px;height:10px;background:#7a7b78;border-radius:2px"></div>
<div class="t" style="left:884px;top:697.6px;font-size:7.0px;color:#d8d8d8;">Object (Rel)</div>
<svg style="left:968px;top:699.5px;" width="6" height="4" viewBox="0 0 6 4"><path d="M0 0 L6 0 L3 3.5 Z" fill="#eee"/></svg>
<div class="a" style="left:987px;top:696px;width:98px;height:10px;background:#7a7b78;border-radius:2px"></div>
<div class="t" style="left:991px;top:697.6px;font-size:7.0px;color:#d8d8d8;">Size</div>
<svg style="left:1075px;top:699.5px;" width="6" height="4" viewBox="0 0 6 4"><path d="M0 0 L6 0 L3 3.5 Z" fill="#eee"/></svg>
<div class="a" style="left:1096px;top:696px;width:100px;height:10px;background:#7a7b78;border-radius:2px"></div>
<div class="t" style="left:1137px;top:697.6px;font-size:7.0px;color:#d8d8d8;">Apply</div>
<div class="t" style="left:1px;top:695.5px;font-size:8px;color:#d0d0d0;font-weight:bold;transform:rotate(-90deg);transform-origin:0 0;letter-spacing:-0.3px">MAXON</div>
<div class="t" style="left:9.5px;top:697px;font-size:7.9px;color:#9a9a98;transform:rotate(-90deg);transform-origin:0 0">CINEMA4D</div>
<div class="a" style="left:24.5px;top:669.5px;width:800px;height:16px;background:#333432;"></div>
<svg style="left:24.5px;top:669.5px;" width="800" height="16" viewBox="0 0 800 16"><path d="M4.40 10.5 L4.40 14.5" stroke="#b8b8b8" stroke-width="0.7"/><path d="M7.03 12 L7.03 14" stroke="#9a9a98" stroke-width="0.6"/><path d="M9.67 12 L9.67 14" stroke="#9a9a98" stroke-width="0.6"/><path d="M12.30 12 L12.30 14" stroke="#9a9a98" stroke-width="0.6"/><path d="M14.93 12 L14.93 14" stroke="#9a9a98" stroke-width="0.6"/><path d="M17.56 12 L17.56 14" stroke="#9a9a98" stroke-width="0.6"/><path d="M20.20 12 L20.20 14" stroke="#9a9a98" stroke-width="0.6"/><path d="M22.83 12 L22.83 14" stroke="#9a9a98" stroke-width="0.6"/><path d="M25.46 12 L25.46 14" stroke="#9a9a98" stroke-width="0.6"/><path d="M28.10 12 L28.10 14" stroke="#9a9a98" stroke-width="0.6"/><path d="M30.73 10.5 L30.73 14.5" stroke="#b8b8b8" stroke-width="0.7"/><path d="M33.36 12 L33.36 14" stroke="#9a9a98" stroke-width="0.6"/><path d="M36.00 12 L36.00 14" stroke="#9a9a98" stroke-width="0.6"/><path d="M38.63 12 L38.63 14" stroke="#9a9a98" stroke-width="0.6"/><path d="M41.26 12 L41.26 14" stroke="#9a9a98" stroke-width="0.6"/><path d="M43.89 12 L43.89 14" stroke="#9a9a98" stroke-width="0.6"/><path d="M46.53 12 L46.53 14" stroke="#9a9a98" stroke-width="0.6"/><path d="M49.16 12 L49.16 14" stroke="#9a9a98" stroke-width="0.6"/><path d="M51.79 12 L51.79 14" stroke="#9a9a98" stroke-width="0.6"/><path d="M54.43 12 L54.43 14" stroke="#9a9a98" stroke-width="0.6"/><path d="M57.06 10.5 L57.06 14.5" stroke="#b8b8b8" stroke-width="0.7"/><path d="M59.69 12 L59.69 14" stroke="#9a9a98" stroke-width="0.6"/><path d="M62.33 12 L62.33 14" stroke="#9a9a98" stroke-width="0.6"/><path d="M64.96 12 L64.96 14" stroke="#9a9a98" stroke-width="0.6"/><path d="M67.59 12 L67.59 14" stroke="#9a9a98" stroke-width="0.6"/><path d="M70.22 12 L70.22 14" stroke="#9a9a98" stroke-width="0.6"/><path d="M72.86 12 L72.86 14" stroke="#9a9a98" stroke-width="0.6"/><path d="M75.49 12 L75.49 14" stroke="#9a9a98" stroke-width="0.6"/><path d="M78.12 12 L78.12 14" stroke="#9a9a98" stroke-width="0.6"/><path d="M80.76 12 L80.76 14" stroke="#9a9a98" stroke-width="0.6"/><path d="M83.39 10.5 L83.39 14.5" stroke="#b8b8b8" stroke-width="0.7"/><path d="M86.02 12 L86.02 14" stroke="#9a9a98" stroke-width="0.6"/><path d="M88.66 12 L88.66 14" stroke="#9a9a98" stroke-width="0.6"/><path d="M91.29 12 L91.29 14" stroke="#9a9a98" stroke-width="0.6"/><path d="M93.92 12 L93.92 14" stroke="#9a9a98" stroke-width="0.6"/><path d="M96.56 12 L96.56 14" stroke="#9a9a98" stroke-width="0.6"/><path d="M99.19 12 L99.19 14" stroke="#9a9a98" stroke-width="0.6"/><path d="M101.82 12 L101.82 14" stroke="#9a9a98" stroke-width="0.6"/><path d="M104.45 12 L104.45 14" stroke="#9a9a98" stroke-width="0.6"/><path d="M107.09 12 L107.09 14" stroke="#9a9a98" stroke-width="0.6"/><path d="M109.72 10.5 L109.72 14.5" stroke="#b8b8b8" stroke-width="0.7"/><path d="M112.35 12 L112.35 14" stroke="#9a9a98" stroke-width="0.6"/><path d="M114.99 12 L114.99 14" stroke="#9a9a98" stroke-width="0.6"/><path d="M117.62 12 L117.62 14" stroke="#9a9a98" stroke-width="0.6"/><path d="M120.25 12 L120.25 14" stroke="#9a9a98" stroke-width="0.6"/><path d="M122.88 12 L122.88 14" stroke="#9a9a98" stroke-width="0.6"/><path d="M125.52 12 L125.52 14" stroke="#9a9a98" stroke-width="0.6"/><path d="M128.15 12 L128.15 14" stroke="#9a9a98" stroke-width="0.6"/><path d="M130.78 12 L130.78 14" stroke="#9a9a98" stroke-width="0.6"/><path d="M133.42 12 L133.42 14" stroke="#9a9a98" stroke-width="0.6"/><path d="M136.05 10.5 L136.05 14.5" stroke="#b8b8b8" stroke-width="0.7"/><path d="M138.68 12 L138.68 14" stroke="#9a9a98" stroke-width="0.6"/><path d="M141.32 12 L141.32 14" stroke="#9a9a98" stroke-width="0.6"/><path d="M143.95 12 L143.95 14" stroke="#9a9a98" stroke-width="0.6"/><path d="M146.58 12 L146.58 14" stroke="#9a9a98" stroke-width="0.6"/><path d="M149.22 12 L149.22 14" stroke="#9a9a98" stroke-width="0.6"/><path d="M151.85 12 L151.85 14" stroke="#9a9a98" stroke-width="0.6"/><path d="M154.48 12 L154.48 14" stroke="#9a9a98" stroke-width="0.6"/><path d="M157.11 12 L157.11 14" stroke="#9a9a98" stroke-width="0.6"/><path d="M159.75 12 L159.75 14" stroke="#9a9a98" stroke-width="0.6"/><path d="M162.38 10.5 L162.38 14.5" stroke="#b8b8b8" stroke-width="0.7"/><path d="M165.01 12 L165.01 14" stroke="#9a9a98" stroke-width="0.6"/><path d="M167.65 12 L167.65 14" stroke="#9a9a98" stroke-width="0.6"/><path d="M170.28 12 L170.28 14" stroke="#9a9a98" stroke-width="0.6"/><path d="M172.91 12 L172.91 14" stroke="#9a9a98" stroke-width="0.6"/><path d="M175.55 12 L175.55 14" stroke="#9a9a98" stroke-width="0.6"/><path d="M178.18 12 L178.18 14" stroke="#9a9a98" stroke-width="0.6"/><path d="M180.81 12 L180.81 14" stroke="#9a9a98" stroke-width="0.6"/><path d="M183.44 12 L183.44 14" stroke="#9a9a98" stroke-width="0.6"/><path d="M186.08 12 L186.08 14" stroke="#9a9a98" stroke-width="0.6"/><path d="M188.71 10.5 L188.71 14.5" stroke="#b8b8b8" stroke-width="0.7"/><path d="M191.34 12 L191.34 14" stroke="#9a9a98" stroke-width="0.6"/><path d="M193.98 12 L193.98 14" stroke="#9a9a98" stroke-width="0.6"/><path d="M196.61 12 L196.61 14" stroke="#9a9a98" stroke-width="0.6"/><path d="M199.24 12 L199.24 14" stroke="#9a9a98" stroke-width="0.6"/><path d="M201.88 12 L201.88 14" stroke="#9a9a98" stroke-width="0.6"/><path d="M204.51 12 L204.51 14" stroke="#9a9a98" stroke-width="0.6"/><path d="M207.14 12 L207.14 14" stroke="#9a9a98" stroke-width="0.6"/><path d="M209.77 12 L209.77 14" stroke="#9a9a98" stroke-width="0.6"/><path d="M212.41 12 L212.41 14" stroke="#9a9a98" stroke-width="0.6"/><path d="M215.04 10.5 L215.04 14.5" stroke="#b8b8b8" stroke-width="0.7"/><path d="M217.67 12 L217.67 14" stroke="#9a9a98" stroke-width="0.6"/><path d="M220.31 12 L220.31 14" stroke="#9a9a98" stroke-width="0.6"/><path d="M222.94 12 L222.94 14" stroke="#9a9a98" stroke-width="0.6"/><path d="M225.57 12 L225.57 14" stroke="#9a9a98" stroke-width="0.6"/><path d="M228.21 12 L228.21 14" stroke="#9a9a98" stroke-width="0.6"/><path d="M230.84 12 L230.84 14" stroke="#9a9a98" stroke-width="0.6"/><path d="M233.47 12 L233.47 14" stroke="#9a9a98" stroke-width="0.6"/><path d="M236.10 12 L236.10 14" stroke="#9a9a98" stroke-width="0.6"/><path d="M238.74 12 L238.74 14" stroke="#9a9a98" stroke-width="0.6"/><path d="M241.37 10.5 L241.37 14.5" stroke="#b8b8b8" stroke-width="0.7"/><path d="M244.00 12 L244.00 14" stroke="#9a9a98" stroke-width="0.6"/><path d="M246.64 12 L246.64 14" stroke="#9a9a98" stroke-width="0.6"/><path d="M249.27 12 L249.27 14" stroke="#9a9a98" stroke-width="0.6"/><path d="M251.90 12 L251.90 14" stroke="#9a9a98" stroke-width="0.6"/><path d="M254.53 12 L254.53 14" stroke="#9a9a98" stroke-width="0.6"/><path d="M257.17 12 L257.17 14" stroke="#9a9a98" stroke-width="0.6"/><path d="M259.80 12 L259.80 14" stroke="#9a9a98" stroke-width="0.6"/><path d="M262.43 12 L262.43 14" stroke="#9a9a98" stroke-width="0.6"/><path d="M265.07 12 L265.07 14" stroke="#9a9a98" stroke-width="0.6"/><path d="M267.70 10.5 L267.70 14.5" stroke="#b8b8b8" stroke-width="0.7"/><path d="M270.33 12 L270.33 14" stroke="#9a9a98" stroke-width="0.6"/><path d="M272.97 12 L272.97 14" stroke="#9a9a98" stroke-width="0.6"/><path d="M275.60 12 L275.60 14" stroke="#9a9a98" stroke-width="0.6"/><path d="M278.23 12 L278.23 14" stroke="#9a9a98" stroke-width="0.6"/><path d="M280.86 12 L280.86 14" stroke="#9a9a98" stroke-width="0.6"/><path d="M283.50 12 L283.50 14" stroke="#9a9a98" stroke-width="0.6"/><path d="M286.13 12 L286.13 14" stroke="#9a9a98" stroke-width="0.6"/><path d="M288.76 12 L288.76 14" stroke="#9a9a98" stroke-width="0.6"/><path d="M291.40 12 L291.40 14" stroke="#9a9a98" stroke-width="0.6"/><path d="M294.03 10.5 L294.03 14.5" stroke="#b8b8b8" stroke-width="0.7"/><path d="M296.66 12 L296.66 14" stroke="#9a9a98" stroke-width="0.6"/><path d="M299.30 12 L299.30 14" stroke="#9a9a98" stroke-width="0.6"/><path d="M301.93 12 L301.93 14" stroke="#9a9a98" stroke-width="0.6"/><path d="M304.56 12 L304.56 14" stroke="#9a9a98" stroke-width="0.6"/><path d="M307.19 12 L307.19 14" stroke="#9a9a98" stroke-width="0.6"/><path d="M309.83 12 L309.83 14" stroke="#9a9a98" stroke-width="0.6"/><path d="M312.46 12 L312.46 14" stroke="#9a9a98" stroke-width="0.6"/><path d="M315.09 12 L315.09 14" stroke="#9a9a98" stroke-width="0.6"/><path d="M317.73 12 L317.73 14" stroke="#9a9a98" stroke-width="0.6"/><path d="M320.36 10.5 L320.36 14.5" stroke="#b8b8b8" stroke-width="0.7"/><path d="M322.99 12 L322.99 14" stroke="#9a9a98" stroke-width="0.6"/><path d="M325.63 12 L325.63 14" stroke="#9a9a98" stroke-width="0.6"/><path d="M328.26 12 L328.26 14" stroke="#9a9a98" stroke-width="0.6"/><path d="M330.89 12 L330.89 14" stroke="#9a9a98" stroke-width="0.6"/><path d="M333.52 12 L333.52 14" stroke="#9a9a98" stroke-width="0.6"/><path d="M336.16 12 L336.16 14" stroke="#9a9a98" stroke-width="0.6"/><path d="M338.79 12 L338.79 14" stroke="#9a9a98" stroke-width="0.6"/><path d="M341.42 12 L341.42 14" stroke="#9a9a98" stroke-width="0.6"/><path d="M344.06 12 L344.06 14" stroke="#9a9a98" stroke-width="0.6"/><path d="M346.69 10.5 L346.69 14.5" stroke="#b8b8b8" stroke-width="0.7"/><path d="M349.32 12 L349.32 14" stroke="#9a9a98" stroke-width="0.6"/><path d="M351.96 12 L351.96 14" stroke="#9a9a98" stroke-width="0.6"/><path d="M354.59 12 L354.59 14" stroke="#9a9a98" stroke-width="0.6"/><path d="M357.22 12 L357.22 14" stroke="#9a9a98" stroke-width="0.6"/><path d="M359.85 12 L359.85 14" stroke="#9a9a98" stroke-width="0.6"/><path d="M362.49 12 L362.49 14" stroke="#9a9a98" stroke-width="0.6"/><path d="M365.12 12 L365.12 14" stroke="#9a9a98" stroke-width="0.6"/><path d="M367.75 12 L367.75 14" stroke="#9a9a98" stroke-width="0.6"/><path d="M370.39 12 L370.39 14" stroke="#9a9a98" stroke-width="0.6"/><path d="M373.02 10.5 L373.02 14.5" stroke="#b8b8b8" stroke-width="0.7"/><path d="M375.65 12 L375.65 14" stroke="#9a9a98" stroke-width="0.6"/><path d="M378.29 12 L378.29 14" stroke="#9a9a98" stroke-width="0.6"/><path d="M380.92 12 L380.92 14" stroke="#9a9a98" stroke-width="0.6"/><path d="M383.55 12 L383.55 14" stroke="#9a9a98" stroke-width="0.6"/><path d="M386.19 12 L386.19 14" stroke="#9a9a98" stroke-width="0.6"/><path d="M388.82 12 L388.82 14" stroke="#9a9a98" stroke-width="0.6"/><path d="M391.45 12 L391.45 14" stroke="#9a9a98" stroke-width="0.6"/><path d="M394.08 12 L394.08 14" stroke="#9a9a98" stroke-width="0.6"/><path d="M396.72 12 L396.72 14" stroke="#9a9a98" stroke-width="0.6"/><path d="M399.35 10.5 L399.35 14.5" stroke="#b8b8b8" stroke-width="0.7"/><path d="M401.98 12 L401.98 14" stroke="#9a9a98" stroke-width="0.6"/><path d="M404.62 12 L404.62 14" stroke="#9a9a98" stroke-width="0.6"/><path d="M407.25 12 L407.25 14" stroke="#9a9a98" stroke-width="0.6"/><path d="M409.88 12 L409.88 14" stroke="#9a9a98" stroke-width="0.6"/><path d="M412.51 12 L412.51 14" stroke="#9a9a98" stroke-width="0.6"/><path d="M415.15 12 L415.15 14" stroke="#9a9a98" stroke-width="0.6"/><path d="M417.78 12 L417.78 14" stroke="#9a9a98" stroke-width="0.6"/><path d="M420.41 12 L420.41 14" stroke="#9a9a98" stroke-width="0.6"/><path d="M423.05 12 L423.05 14" stroke="#9a9a98" stroke-width="0.6"/><path d="M425.68 10.5 L425.68 14.5" stroke="#b8b8b8" stroke-width="0.7"/><path d="M428.31 12 L428.31 14" stroke="#9a9a98" stroke-width="0.6"/><path d="M430.95 12 L430.95 14" stroke="#9a9a98" stroke-width="0.6"/><path d="M433.58 12 L433.58 14" stroke="#9a9a98" stroke-width="0.6"/><path d="M436.21 12 L436.21 14" stroke="#9a9a98" stroke-width="0.6"/><path d="M438.84 12 L438.84 14" stroke="#9a9a98" stroke-width="0.6"/><path d="M441.48 12 L441.48 14" stroke="#9a9a98" stroke-width="0.6"/><path d="M444.11 12 L444.11 14" stroke="#9a9a98" stroke-width="0.6"/><path d="M446.74 12 L446.74 14" stroke="#9a9a98" stroke-width="0.6"/><path d="M449.38 12 L449.38 14" stroke="#9a9a98" stroke-width="0.6"/><path d="M452.01 10.5 L452.01 14.5" stroke="#b8b8b8" stroke-width="0.7"/><path d="M454.64 12 L454.64 14" stroke="#9a9a98" stroke-width="0.6"/><path d="M457.28 12 L457.28 14" stroke="#9a9a98" stroke-width="0.6"/><path d="M459.91 12 L459.91 14" stroke="#9a9a98" stroke-width="0.6"/><path d="M462.54 12 L462.54 14" stroke="#9a9a98" stroke-width="0.6"/><path d="M465.17 12 L465.17 14" stroke="#9a9a98" stroke-width="0.6"/><path d="M467.81 12 L467.81 14" stroke="#9a9a98" stroke-width="0.6"/><path d="M470.44 12 L470.44 14" stroke="#9a9a98" stroke-width="0.6"/><path d="M473.07 12 L473.07 14" stroke="#9a9a98" stroke-width="0.6"/><path d="M475.71 12 L475.71 14" stroke="#9a9a98" stroke-width="0.6"/><path d="M478.34 10.5 L478.34 14.5" stroke="#b8b8b8" stroke-width="0.7"/><path d="M480.97 12 L480.97 14" stroke="#9a9a98" stroke-width="0.6"/><path d="M483.61 12 L483.61 14" stroke="#9a9a98" stroke-width="0.6"/><path d="M486.24 12 L486.24 14" stroke="#9a9a98" stroke-width="0.6"/><path d="M488.87 12 L488.87 14" stroke="#9a9a98" stroke-width="0.6"/><path d="M491.50 12 L491.50 14" stroke="#9a9a98" stroke-width="0.6"/><path d="M494.14 12 L494.14 14" stroke="#9a9a98" stroke-width="0.6"/><path d="M496.77 12 L496.77 14" stroke="#9a9a98" stroke-width="0.6"/><path d="M499.40 12 L499.40 14" stroke="#9a9a98" stroke-width="0.6"/><path d="M502.04 12 L502.04 14" stroke="#9a9a98" stroke-width="0.6"/><path d="M504.67 10.5 L504.67 14.5" stroke="#b8b8b8" stroke-width="0.7"/><path d="M507.30 12 L507.30 14" stroke="#9a9a98" stroke-width="0.6"/><path d="M509.94 12 L509.94 14" stroke="#9a9a98" stroke-width="0.6"/><path d="M512.57 12 L512.57 14" stroke="#9a9a98" stroke-width="0.6"/><path d="M515.20 12 L515.20 14" stroke="#9a9a98" stroke-width="0.6"/><path d="M517.83 12 L517.83 14" stroke="#9a9a98" stroke-width="0.6"/><path d="M520.47 12 L520.47 14" stroke="#9a9a98" stroke-width="0.6"/><path d="M523.10 12 L523.10 14" stroke="#9a9a98" stroke-width="0.6"/><path d="M525.73 12 L525.73 14" stroke="#9a9a98" stroke-width="0.6"/><path d="M528.37 12 L528.37 14" stroke="#9a9a98" stroke-width="0.6"/><path d="M531.00 10.5 L531.00 14.5" stroke="#b8b8b8" stroke-width="0.7"/><path d="M533.63 12 L533.63 14" stroke="#9a9a98" stroke-width="0.6"/><path d="M536.27 12 L536.27 14" stroke="#9a9a98" stroke-width="0.6"/><path d="M538.90 12 L538.90 14" stroke="#9a9a98" stroke-width="0.6"/><path d="M541.53 12 L541.53 14" stroke="#9a9a98" stroke-width="0.6"/><path d="M544.16 12 L544.16 14" stroke="#9a9a98" stroke-width="0.6"/><path d="M546.80 12 L546.80 14" stroke="#9a9a98" stroke-width="0.6"/><path d="M549.43 12 L549.43 14" stroke="#9a9a98" stroke-width="0.6"/><path d="M552.06 12 L552.06 14" stroke="#9a9a98" stroke-width="0.6"/><path d="M554.70 12 L554.70 14" stroke="#9a9a98" stroke-width="0.6"/><path d="M557.33 10.5 L557.33 14.5" stroke="#b8b8b8" stroke-width="0.7"/><path d="M559.96 12 L559.96 14" stroke="#9a9a98" stroke-width="0.6"/><path d="M562.60 12 L562.60 14" stroke="#9a9a98" stroke-width="0.6"/><path d="M565.23 12 L565.23 14" stroke="#9a9a98" stroke-width="0.6"/><path d="M567.86 12 L567.86 14" stroke="#9a9a98" stroke-width="0.6"/><path d="M570.50 12 L570.50 14" stroke="#9a9a98" stroke-width="0.6"/><path d="M573.13 12 L573.13 14" stroke="#9a9a98" stroke-width="0.6"/><path d="M575.76 12 L575.76 14" stroke="#9a9a98" stroke-width="0.6"/><path d="M578.39 12 L578.39 14" stroke="#9a9a98" stroke-width="0.6"/><path d="M581.03 12 L581.03 14" stroke="#9a9a98" stroke-width="0.6"/><path d="M583.66 10.5 L583.66 14.5" stroke="#b8b8b8" stroke-width="0.7"/><path d="M586.29 12 L586.29 14" stroke="#9a9a98" stroke-width="0.6"/><path d="M588.93 12 L588.93 14" stroke="#9a9a98" stroke-width="0.6"/><path d="M591.56 12 L591.56 14" stroke="#9a9a98" stroke-width="0.6"/><path d="M594.19 12 L594.19 14" stroke="#9a9a98" stroke-width="0.6"/><path d="M596.82 12 L596.82 14" stroke="#9a9a98" stroke-width="0.6"/><path d="M599.46 12 L599.46 14" stroke="#9a9a98" stroke-width="0.6"/><path d="M602.09 12 L602.09 14" stroke="#9a9a98" stroke-width="0.6"/><path d="M604.72 12 L604.72 14" stroke="#9a9a98" stroke-width="0.6"/><path d="M607.36 12 L607.36 14" stroke="#9a9a98" stroke-width="0.6"/><path d="M609.99 10.5 L609.99 14.5" stroke="#b8b8b8" stroke-width="0.7"/><path d="M612.62 12 L612.62 14" stroke="#9a9a98" stroke-width="0.6"/><path d="M615.26 12 L615.26 14" stroke="#9a9a98" stroke-width="0.6"/><path d="M617.89 12 L617.89 14" stroke="#9a9a98" stroke-width="0.6"/><path d="M620.52 12 L620.52 14" stroke="#9a9a98" stroke-width="0.6"/><path d="M623.15 12 L623.15 14" stroke="#9a9a98" stroke-width="0.6"/><path d="M625.79 12 L625.79 14" stroke="#9a9a98" stroke-width="0.6"/><path d="M628.42 12 L628.42 14" stroke="#9a9a98" stroke-width="0.6"/><path d="M631.05 12 L631.05 14" stroke="#9a9a98" stroke-width="0.6"/><path d="M633.69 12 L633.69 14" stroke="#9a9a98" stroke-width="0.6"/><path d="M636.32 10.5 L636.32 14.5" stroke="#b8b8b8" stroke-width="0.7"/><path d="M638.95 12 L638.95 14" stroke="#9a9a98" stroke-width="0.6"/><path d="M641.59 12 L641.59 14" stroke="#9a9a98" stroke-width="0.6"/><path d="M644.22 12 L644.22 14" stroke="#9a9a98" stroke-width="0.6"/><path d="M646.85 12 L646.85 14" stroke="#9a9a98" stroke-width="0.6"/><path d="M649.49 12 L649.49 14" stroke="#9a9a98" stroke-width="0.6"/><path d="M652.12 12 L652.12 14" stroke="#9a9a98" stroke-width="0.6"/><path d="M654.75 12 L654.75 14" stroke="#9a9a98" stroke-width="0.6"/><path d="M657.38 12 L657.38 14" stroke="#9a9a98" stroke-width="0.6"/><path d="M660.02 12 L660.02 14" stroke="#9a9a98" stroke-width="0.6"/><path d="M662.65 10.5 L662.65 14.5" stroke="#b8b8b8" stroke-width="0.7"/><path d="M665.28 12 L665.28 14" stroke="#9a9a98" stroke-width="0.6"/><path d="M667.92 12 L667.92 14" stroke="#9a9a98" stroke-width="0.6"/><path d="M670.55 12 L670.55 14" stroke="#9a9a98" stroke-width="0.6"/><path d="M673.18 12 L673.18 14" stroke="#9a9a98" stroke-width="0.6"/><path d="M675.81 12 L675.81 14" stroke="#9a9a98" stroke-width="0.6"/><path d="M678.45 12 L678.45 14" stroke="#9a9a98" stroke-width="0.6"/><path d="M681.08 12 L681.08 14" stroke="#9a9a98" stroke-width="0.6"/><path d="M683.71 12 L683.71 14" stroke="#9a9a98" stroke-width="0.6"/><path d="M686.35 12 L686.35 14" stroke="#9a9a98" stroke-width="0.6"/><path d="M688.98 10.5 L688.98 14.5" stroke="#b8b8b8" stroke-width="0.7"/><path d="M691.61 12 L691.61 14" stroke="#9a9a98" stroke-width="0.6"/><path d="M694.25 12 L694.25 14" stroke="#9a9a98" stroke-width="0.6"/><path d="M696.88 12 L696.88 14" stroke="#9a9a98" stroke-width="0.6"/><path d="M699.51 12 L699.51 14" stroke="#9a9a98" stroke-width="0.6"/><path d="M702.14 12 L702.14 14" stroke="#9a9a98" stroke-width="0.6"/><path d="M704.78 12 L704.78 14" stroke="#9a9a98" stroke-width="0.6"/><path d="M707.41 12 L707.41 14" stroke="#9a9a98" stroke-width="0.6"/><path d="M710.04 12 L710.04 14" stroke="#9a9a98" stroke-width="0.6"/><path d="M712.68 12 L712.68 14" stroke="#9a9a98" stroke-width="0.6"/><path d="M715.31 10.5 L715.31 14.5" stroke="#b8b8b8" stroke-width="0.7"/><path d="M717.94 12 L717.94 14" stroke="#9a9a98" stroke-width="0.6"/><path d="M720.58 12 L720.58 14" stroke="#9a9a98" stroke-width="0.6"/><path d="M723.21 12 L723.21 14" stroke="#9a9a98" stroke-width="0.6"/><path d="M725.84 12 L725.84 14" stroke="#9a9a98" stroke-width="0.6"/><path d="M728.48 12 L728.48 14" stroke="#9a9a98" stroke-width="0.6"/><path d="M731.11 12 L731.11 14" stroke="#9a9a98" stroke-width="0.6"/><path d="M733.74 12 L733.74 14" stroke="#9a9a98" stroke-width="0.6"/><path d="M736.37 12 L736.37 14" stroke="#9a9a98" stroke-width="0.6"/><path d="M739.01 12 L739.01 14" stroke="#9a9a98" stroke-width="0.6"/><path d="M741.64 10.5 L741.64 14.5" stroke="#b8b8b8" stroke-width="0.7"/><path d="M744.27 12 L744.27 14" stroke="#9a9a98" stroke-width="0.6"/><path d="M746.91 12 L746.91 14" stroke="#9a9a98" stroke-width="0.6"/><path d="M749.54 12 L749.54 14" stroke="#9a9a98" stroke-width="0.6"/><path d="M752.17 12 L752.17 14" stroke="#9a9a98" stroke-width="0.6"/><path d="M754.80 12 L754.80 14" stroke="#9a9a98" stroke-width="0.6"/><path d="M757.44 12 L757.44 14" stroke="#9a9a98" stroke-width="0.6"/><path d="M760.07 12 L760.07 14" stroke="#9a9a98" stroke-width="0.6"/><path d="M762.70 12 L762.70 14" stroke="#9a9a98" stroke-width="0.6"/><path d="M765.34 12 L765.34 14" stroke="#9a9a98" stroke-width="0.6"/><path d="M767.97 10.5 L767.97 14.5" stroke="#b8b8b8" stroke-width="0.7"/><path d="M770.60 12 L770.60 14" stroke="#9a9a98" stroke-width="0.6"/><path d="M773.24 12 L773.24 14" stroke="#9a9a98" stroke-width="0.6"/><path d="M775.87 12 L775.87 14" stroke="#9a9a98" stroke-width="0.6"/><path d="M778.50 12 L778.50 14" stroke="#9a9a98" stroke-width="0.6"/><path d="M781.13 12 L781.13 14" stroke="#9a9a98" stroke-width="0.6"/><path d="M783.77 12 L783.77 14" stroke="#9a9a98" stroke-width="0.6"/><path d="M786.40 12 L786.40 14" stroke="#9a9a98" stroke-width="0.6"/><path d="M789.03 12 L789.03 14" stroke="#9a9a98" stroke-width="0.6"/><path d="M791.67 12 L791.67 14" stroke="#9a9a98" stroke-width="0.6"/><path d="M794.30 10.5 L794.30 14.5" stroke="#b8b8b8" stroke-width="0.7"/><path d="M70.06 2 L70.06 15" stroke="#5a5a58" stroke-width="0.7"/><path d="M201.71 2 L201.71 15" stroke="#5a5a58" stroke-width="0.7"/><path d="M333.36 2 L333.36 15" stroke="#5a5a58" stroke-width="0.7"/><path d="M465.01 2 L465.01 15" stroke="#5a5a58" stroke-width="0.7"/><path d="M596.66 2 L596.66 15" stroke="#5a5a58" stroke-width="0.7"/><path d="M728.31 2 L728.31 15" stroke="#5a5a58" stroke-width="0.7"/></svg>
<div class="t" style="left:27.299999999999997px;top:671.2px;font-size:7.0px;color:#cfcfcf;">0</div>
<div class="t" style="left:51.23px;top:671.2px;font-size:7.0px;color:#cfcfcf;">10</div>
<div class="t" style="left:77.56px;top:671.2px;font-size:7.0px;color:#cfcfcf;">20</div>
<div class="t" style="left:103.88999999999999px;top:671.2px;font-size:7.0px;color:#cfcfcf;">30</div>
<div class="t" style="left:130.22px;top:671.2px;font-size:7.0px;color:#cfcfcf;">40</div>
<div class="t" style="left:156.55px;top:671.2px;font-size:7.0px;color:#cfcfcf;">50</div>
<div class="t" style="left:182.88px;top:671.2px;font-size:7.0px;color:#cfcfcf;">60</div>
<div class="t" style="left:209.21px;top:671.2px;font-size:7.0px;color:#cfcfcf;">70</div>
<div class="t" style="left:235.54px;top:671.2px;font-size:7.0px;color:#cfcfcf;">80</div>
<div class="t" style="left:261.87px;top:671.2px;font-size:7.0px;color:#cfcfcf;">90</div>
<div class="t" style="left:312.53px;top:671.2px;font-size:7.0px;color:#cfcfcf;">110</div>
<div class="t" style="left:338.85999999999996px;top:671.2px;font-size:7.0px;color:#cfcfcf;">120</div>
<div class="t" style="left:365.19px;top:671.2px;font-size:7.0px;color:#cfcfcf;">130</div>
<div class="t" style="left:391.52px;top:671.2px;font-size:7.0px;color:#cfcfcf;">140</div>
<div class="t" style="left:417.84999999999997px;top:671.2px;font-size:7.0px;color:#cfcfcf;">150</div>
<div class="t" style="left:444.17999999999995px;top:671.2px;font-size:7.0px;color:#cfcfcf;">160</div>
<div class="t" style="left:470.51px;top:671.2px;font-size:7.0px;color:#cfcfcf;">170</div>
<div class="t" style="left:496.84px;top:671.2px;font-size:7.0px;color:#cfcfcf;">180</div>
<div class="t" style="left:523.17px;top:671.2px;font-size:7.0px;color:#cfcfcf;">190</div>
<div class="t" style="left:549.5px;top:671.2px;font-size:7.0px;color:#cfcfcf;">200</div>
<div class="t" style="left:575.8299999999999px;top:671.2px;font-size:7.0px;color:#cfcfcf;">210</div>
<div class="t" style="left:602.16px;top:671.2px;font-size:7.0px;color:#cfcfcf;">220</div>
<div class="t" style="left:628.49px;top:671.2px;font-size:7.0px;color:#cfcfcf;">230</div>
<div class="t" style="left:654.8199999999999px;top:671.2px;font-size:7.0px;color:#cfcfcf;">240</div>
<div class="t" style="left:681.15px;top:671.2px;font-size:7.0px;color:#cfcfcf;">250</div>
<div class="t" style="left:707.48px;top:671.2px;font-size:7.0px;color:#cfcfcf;">260</div>
<div class="t" style="left:733.81px;top:671.2px;font-size:7.0px;color:#cfcfcf;">270</div>
<div class="t" style="left:760.14px;top:671.2px;font-size:7.0px;color:#cfcfcf;">280</div>
<div class="t" style="left:786.47px;top:671.2px;font-size:7.0px;color:#cfcfcf;">290</div>
<div class="t" style="left:812.8px;top:671.2px;font-size:7.0px;color:#cfcfcf;">30(</div>
<div class="a" style="left:281.301px;top:670.5px;width:6px;height:8px;background:#40e080;"></div>
<div class="t" style="left:287.301px;top:671.2px;font-size:7.0px;color:#40e080;">97)</div>
<div class="a" style="left:283.801px;top:678px;width:1px;height:7px;background:#40e080;"></div>
<div class="a" style="left:201px;top:679px;width:24px;height:5px;background:#8a8b88;"></div>
<div class="a" style="left:826.5px;top:671px;width:42.5px;height:10px;background:#383937;border-radius:1px"></div>
<div class="t" style="left:830px;top:672.6px;font-size:7.0px;color:#c8c8c8;">97 F</div>
<div class="t" style="left:862px;top:672.4px;font-size:6px;color:#8a8b88;">⇕</div>
<div class="a" style="left:25px;top:688px;width:41px;height:9px;background:#383937;border-radius:1px"></div>
<div class="t" style="left:28px;top:689.3px;font-size:7.0px;color:#c8c8c8;">0 F</div>
<div class="t" style="left:60px;top:689.1px;font-size:6px;color:#8a8b88;">⇕</div>
<div class="a" style="left:70.5px;top:687.5px;width:515px;height:10px;background:linear-gradient(#949592,#7d7e7b);border-radius:2px"></div>
<div class="a" style="left:71px;top:688px;width:8px;height:9px;background:#a8a9a6;"></div>
<svg style="left:72.5px;top:690px;" width="5" height="5" viewBox="0 0 5 5"><path d="M4.5 0 L0.5 2.5 L4.5 5 Z" fill="#eee"/></svg>
<div class="t" style="left:82px;top:689.3px;font-size:7.0px;color:#9a9b98;">0 F</div>
<div class="t" style="left:556px;top:689.3px;font-size:7.0px;color:#a0a19e;">300 F</div>
<div class="a" style="left:576px;top:688px;width:9px;height:9px;background:#a8a9a6;"></div>
<svg style="left:578.5px;top:690px;" width="5" height="5" viewBox="0 0 5 5"><path d="M0.5 0 L4.5 2.5 L0.5 5 Z" fill="#eee"/></svg>
<div class="a" style="left:588px;top:688px;width:44px;height:10px;background:#383937;border-radius:1px"></div>
<div class="t" style="left:592px;top:689.6px;font-size:7.0px;color:#c8c8c8;">300 F</div>
<div class="t" style="left:626px;top:689.4px;font-size:6px;color:#8a8b88;">⇕</div>
<div class="a" style="left:638.5px;top:687px;width:11px;height:12px;background:#6a6b68;"></div>
<svg style="left:639.5px;top:688.5px;" width="9" height="9" viewBox="0 0 9 9"><path d="M1.5 1 L1.5 8 M8 1 L3 4.5 L8 8 Z" stroke="#111" fill="#111" stroke-width="1.3"/></svg>
<div class="a" style="left:657px;top:687px;width:60px;height:12px;background:#6a6b68;"></div>
<svg style="left:657px;top:688px;" width="60" height="10" viewBox="0 0 60 10"><path d="M8.5 2.5 A3.2 3.2 0 1 0 8.5 7.5" stroke="#111" stroke-width="1.8" fill="none"/><path d="M22 2 L17.5 5 L22 8 Z" fill="#222"/><path d="M17 2 L17 8" stroke="#222" stroke-width="0.8"/><path d="M28.5 1.5 L34.5 5 L28.5 8.5 Z" fill="#35c060"/><path d="M40.5 2 L45 5 L40.5 8 Z" fill="#222"/><path d="M45.5 2 L45.5 8" stroke="#222" stroke-width="0.8"/><path d="M54 2.5 A3.2 3.2 0 1 1 54 7.5" stroke="#111" stroke-width="1.8" fill="none"/></svg>
<div class="a" style="left:726.5px;top:687px;width:11px;height:12px;background:#6a6b68;"></div>
<svg style="left:727.5px;top:688.5px;" width="9" height="9" viewBox="0 0 9 9"><path d="M7.5 1 L7.5 8 M1 1 L6 4.5 L1 8 Z" stroke="#111" fill="#111" stroke-width="1.3"/></svg>
<div class="a" style="left:745px;top:687px;width:35px;height:12px;background:#6a6b68;"></div>
<svg style="left:746.0px;top:688px;" width="10" height="10" viewBox="0 0 10 10"><circle cx="5" cy="5" r="4.2" fill="#d03838" stroke="#7a1a1a" stroke-width="0.6"/><path d="M5 2.5 L5 7.5" stroke="#f0c0c0" stroke-width="1"/></svg>
<svg style="left:757.6px;top:688px;" width="10" height="10" viewBox="0 0 10 10"><circle cx="5" cy="5" r="4.2" fill="#d03838" stroke="#7a1a1a" stroke-width="0.6"/><path d="M5 2.5 L5 7.5" stroke="#f0c0c0" stroke-width="1"/></svg>
<svg style="left:769.2px;top:688px;" width="10" height="10" viewBox="0 0 10 10"><circle cx="5" cy="5" r="4.2" fill="#d03838" stroke="#7a1a1a" stroke-width="0.6"/><path d="M5 2.5 L5 7.5" stroke="#f0c0c0" stroke-width="1"/></svg>
<div class="a" style="left:788.5px;top:687px;width:62px;height:12px;background:#a9b8d6;"></div>
<svg style="left:789.5px;top:688px;" width="60" height="10" viewBox="0 0 60 10"><path d="M5.5 1.5 L5.5 8.5 M2 5 L9 5" stroke="#e8a020" stroke-width="2"/><rect x="15.5" y="1.5" width="7" height="7" fill="#f0a828"/><rect x="17.5" y="3.5" width="3" height="3" fill="#a9b8d6"/><circle cx="31" cy="5" r="3.6" fill="none" stroke="#e8a020" stroke-width="1.8"/><circle cx="43" cy="5" r="4.2" fill="#ddd" stroke="#222" stroke-width="0.8"/><text x="40.5" y="7.7" font-size="6.5" font-weight="bold" fill="#223" font-family="Liberation Sans">P</text><path d="M51 2 h2 M55 2 h2 M51 5 h2 M55 5 h2 M51 8 h2 M55 8 h2" stroke="#d09030" stroke-width="1.6"/></svg>
<div class="a" style="left:857px;top:687px;width:11px;height:12px;background:#a9b8d6;"></div>
<svg style="left:858px;top:688px;" width="9" height="10" viewBox="0 0 9 10"><rect x="2" y="0.5" width="5" height="9" fill="none" stroke="#222" stroke-width="0.8"/><circle cx="4.5" cy="2.5" r="1.1" fill="#e8a020"/><circle cx="4.5" cy="5" r="1.1" fill="#e8a020"/><circle cx="4.5" cy="7.5" r="1.1" fill="#e8a020"/></svg>
<div class="a" style="left:869.5px;top:666px;width:1px;height:47px;background:#3c3d3b;"></div>
<div class="a" style="left:0px;top:700.5px;width:869px;height:0.8px;background:#3f403e;"></div>
<svg style="left:5px;top:703px;" width="9" height="8" viewBox="0 0 9 8"><path d="M0 1 L9 1 M0 3.5 L9 3.5 M0 6 L9 6" stroke="#6a6b68" stroke-width="1"/></svg>
<div class="t" style="left:16px;top:705.3px;font-size:7.17px;color:#d0d0d0;">Move: Click and drag to move elements. Hold down SHIFT to quantize movement / add to the selection in point mode, CTRL to remove.</div>
</body></html>
